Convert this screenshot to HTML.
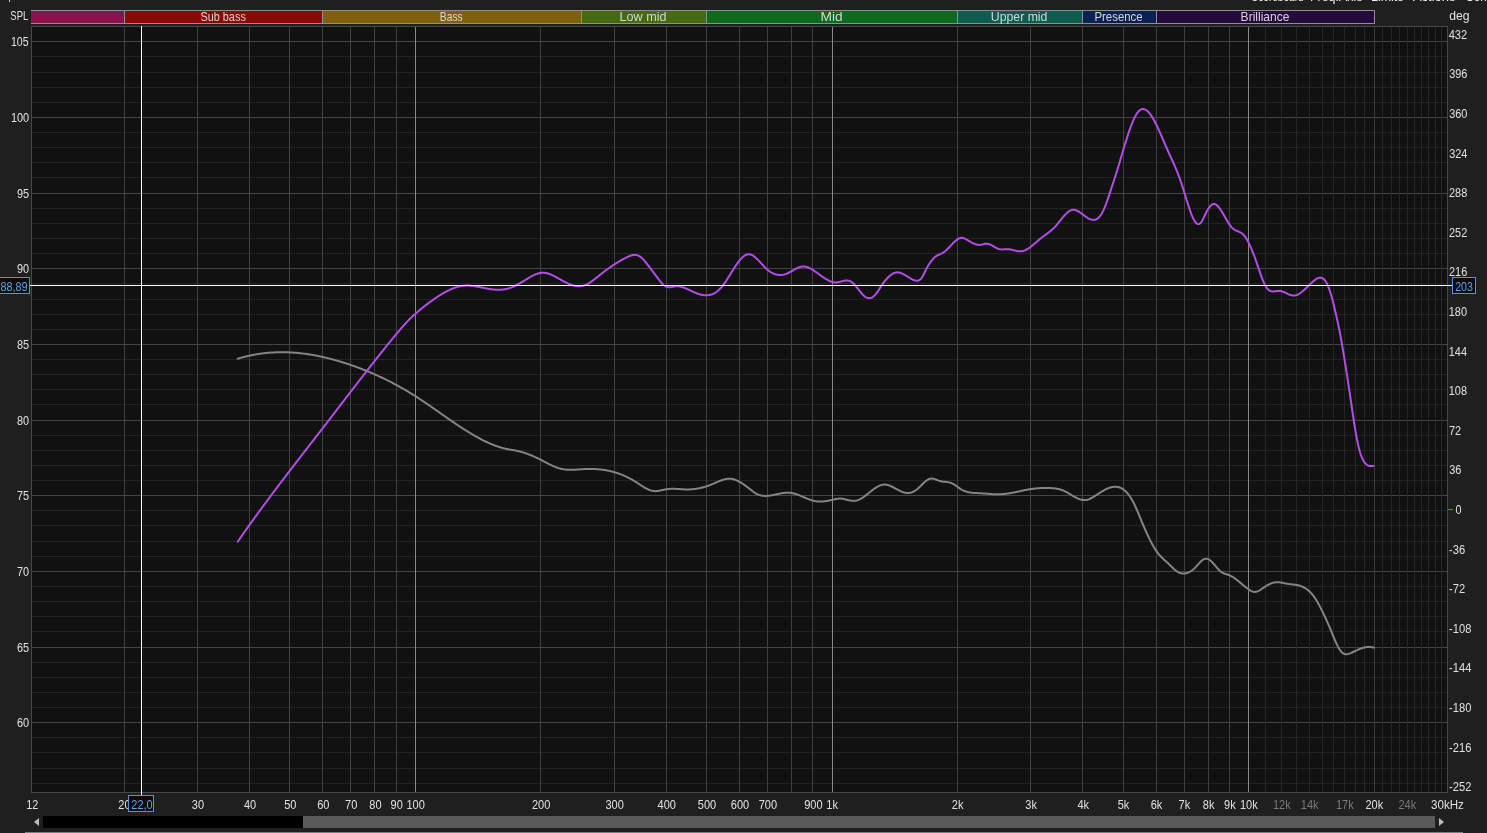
<!DOCTYPE html><html><head><meta charset="utf-8"><style>
html,body{margin:0;padding:0;background:#1f1f1f;width:1487px;height:833px;overflow:hidden}
svg{display:block;will-change:transform}
text{font-family:"Liberation Sans", sans-serif}
</style></head><body>
<svg width="1487" height="833" viewBox="0 0 1487 833">
<rect x="0" y="0" width="1487" height="833" fill="#1f1f1f"/>
<text transform="translate(1251.54,1.00) scale(0.840,1)" font-size="12" fill="#f0f0f0">Scoreboard</text>
<text transform="translate(1309.99,1.00) scale(1.035,1)" font-size="12" fill="#f0f0f0">Freq.Axis</text>
<text transform="translate(1370.98,1.00) scale(1.036,1)" font-size="12" fill="#f0f0f0">Limits</text>
<text transform="translate(1412.97,1.00) scale(1.080,1)" font-size="12" fill="#f0f0f0">Actions</text>
<text transform="translate(1465.41,1.00) scale(0.962,1)" font-size="12" fill="#f0f0f0">Controls</text>
<text transform="translate(10.37,20.10) scale(0.787,1)" font-size="12" fill="#e0e0e0">SPL</text>
<text transform="translate(1449.29,19.90) scale(1.013,1)" font-size="12" fill="#e0e0e0">deg</text>
<g shape-rendering="crispEdges">
<rect x="31" y="10" width="1344" height="14" fill="#8f8f8f"/>
<rect x="31" y="11" width="93" height="12" fill="#8c0f4e"/>
<rect x="125" y="11" width="197" height="12" fill="#8a0808"/>
<rect x="323" y="11" width="258" height="12" fill="#80600c"/>
<rect x="582" y="11" width="124" height="12" fill="#456a10"/>
<rect x="707" y="11" width="250" height="12" fill="#0c6a1e"/>
<rect x="958" y="11" width="124" height="12" fill="#0c5c50"/>
<rect x="1083" y="11" width="73" height="12" fill="#0a2152"/>
<rect x="1157" y="11" width="217" height="12" fill="#250a3c"/>
</g>
<text transform="translate(200.40,20.80) scale(0.909,1)" font-size="12" fill="#d6d6d6">Sub bass</text>
<text transform="translate(439.86,20.80) scale(0.859,1)" font-size="12" fill="#d6d6d6">Bass</text>
<text transform="translate(619.57,20.80) scale(1.053,1)" font-size="12" fill="#d6d6d6">Low mid</text>
<text transform="translate(820.58,20.80) scale(1.143,1)" font-size="12" fill="#d6d6d6">Mid</text>
<text transform="translate(990.75,20.80) scale(1.025,1)" font-size="12" fill="#d6d6d6">Upper mid</text>
<text transform="translate(1094.47,20.80) scale(0.950,1)" font-size="12" fill="#d6d6d6">Presence</text>
<text transform="translate(1240.62,20.80) scale(1.005,1)" font-size="12" fill="#d6d6d6">Brilliance</text>
<rect x="31" y="26" width="1417" height="767" fill="#111111"/>
<g shape-rendering="crispEdges">
<rect x="32" y="41" width="1415" height="1" fill="#444444"/>
<rect x="32" y="56" width="1415" height="1" fill="#232323"/>
<rect x="32" y="72" width="1415" height="1" fill="#232323"/>
<rect x="32" y="87" width="1415" height="1" fill="#232323"/>
<rect x="32" y="102" width="1415" height="1" fill="#232323"/>
<rect x="32" y="117" width="1415" height="1" fill="#444444"/>
<rect x="32" y="132" width="1415" height="1" fill="#232323"/>
<rect x="32" y="147" width="1415" height="1" fill="#232323"/>
<rect x="32" y="162" width="1415" height="1" fill="#232323"/>
<rect x="32" y="177" width="1415" height="1" fill="#232323"/>
<rect x="32" y="193" width="1415" height="1" fill="#444444"/>
<rect x="32" y="208" width="1415" height="1" fill="#232323"/>
<rect x="32" y="223" width="1415" height="1" fill="#232323"/>
<rect x="32" y="238" width="1415" height="1" fill="#232323"/>
<rect x="32" y="253" width="1415" height="1" fill="#232323"/>
<rect x="32" y="268" width="1415" height="1" fill="#444444"/>
<rect x="32" y="283" width="1415" height="1" fill="#232323"/>
<rect x="32" y="299" width="1415" height="1" fill="#232323"/>
<rect x="32" y="314" width="1415" height="1" fill="#232323"/>
<rect x="32" y="329" width="1415" height="1" fill="#232323"/>
<rect x="32" y="344" width="1415" height="1" fill="#444444"/>
<rect x="32" y="359" width="1415" height="1" fill="#232323"/>
<rect x="32" y="374" width="1415" height="1" fill="#232323"/>
<rect x="32" y="389" width="1415" height="1" fill="#232323"/>
<rect x="32" y="404" width="1415" height="1" fill="#232323"/>
<rect x="32" y="420" width="1415" height="1" fill="#444444"/>
<rect x="32" y="435" width="1415" height="1" fill="#232323"/>
<rect x="32" y="450" width="1415" height="1" fill="#232323"/>
<rect x="32" y="465" width="1415" height="1" fill="#232323"/>
<rect x="32" y="480" width="1415" height="1" fill="#232323"/>
<rect x="32" y="495" width="1415" height="1" fill="#444444"/>
<rect x="32" y="510" width="1415" height="1" fill="#232323"/>
<rect x="32" y="525" width="1415" height="1" fill="#232323"/>
<rect x="32" y="541" width="1415" height="1" fill="#232323"/>
<rect x="32" y="556" width="1415" height="1" fill="#232323"/>
<rect x="32" y="571" width="1415" height="1" fill="#444444"/>
<rect x="32" y="586" width="1415" height="1" fill="#232323"/>
<rect x="32" y="601" width="1415" height="1" fill="#232323"/>
<rect x="32" y="616" width="1415" height="1" fill="#232323"/>
<rect x="32" y="631" width="1415" height="1" fill="#232323"/>
<rect x="32" y="647" width="1415" height="1" fill="#444444"/>
<rect x="32" y="662" width="1415" height="1" fill="#232323"/>
<rect x="32" y="677" width="1415" height="1" fill="#232323"/>
<rect x="32" y="692" width="1415" height="1" fill="#232323"/>
<rect x="32" y="707" width="1415" height="1" fill="#232323"/>
<rect x="32" y="722" width="1415" height="1" fill="#444444"/>
<rect x="32" y="737" width="1415" height="1" fill="#232323"/>
<rect x="32" y="752" width="1415" height="1" fill="#232323"/>
<rect x="32" y="768" width="1415" height="1" fill="#232323"/>
<rect x="32" y="783" width="1415" height="1" fill="#232323"/>
<rect x="124" y="27" width="1" height="765" fill="#404040"/>
<rect x="197" y="27" width="1" height="765" fill="#404040"/>
<rect x="249" y="27" width="1" height="765" fill="#404040"/>
<rect x="289" y="27" width="1" height="765" fill="#404040"/>
<rect x="322" y="27" width="1" height="765" fill="#404040"/>
<rect x="350" y="27" width="1" height="765" fill="#404040"/>
<rect x="374" y="27" width="1" height="765" fill="#404040"/>
<rect x="396" y="27" width="1" height="765" fill="#404040"/>
<rect x="415" y="27" width="1" height="765" fill="#888888"/>
<rect x="540" y="27" width="1" height="765" fill="#404040"/>
<rect x="614" y="27" width="1" height="765" fill="#404040"/>
<rect x="666" y="27" width="1" height="765" fill="#404040"/>
<rect x="706" y="27" width="1" height="765" fill="#404040"/>
<rect x="739" y="27" width="1" height="765" fill="#404040"/>
<rect x="767" y="27" width="1" height="765" fill="#404040"/>
<rect x="791" y="27" width="1" height="765" fill="#404040"/>
<rect x="812" y="27" width="1" height="765" fill="#404040"/>
<rect x="832" y="27" width="1" height="765" fill="#888888"/>
<rect x="957" y="27" width="1" height="765" fill="#404040"/>
<rect x="1030" y="27" width="1" height="765" fill="#404040"/>
<rect x="1082" y="27" width="1" height="765" fill="#404040"/>
<rect x="1123" y="27" width="1" height="765" fill="#404040"/>
<rect x="1156" y="27" width="1" height="765" fill="#404040"/>
<rect x="1184" y="27" width="1" height="765" fill="#404040"/>
<rect x="1208" y="27" width="1" height="765" fill="#404040"/>
<rect x="1229" y="27" width="1" height="765" fill="#404040"/>
<rect x="1248" y="27" width="1" height="765" fill="#888888"/>
<rect x="1265" y="27" width="1" height="765" fill="#262626"/>
<rect x="1281" y="27" width="1" height="765" fill="#262626"/>
<rect x="1296" y="27" width="1" height="765" fill="#262626"/>
<rect x="1309" y="27" width="1" height="765" fill="#262626"/>
<rect x="1322" y="27" width="1" height="765" fill="#262626"/>
<rect x="1333" y="27" width="1" height="765" fill="#262626"/>
<rect x="1344" y="27" width="1" height="765" fill="#262626"/>
<rect x="1355" y="27" width="1" height="765" fill="#262626"/>
<rect x="1364" y="27" width="1" height="765" fill="#262626"/>
<rect x="1374" y="27" width="1" height="765" fill="#3c3c3c"/>
<rect x="1382" y="27" width="1" height="765" fill="#262626"/>
<rect x="1391" y="27" width="1" height="765" fill="#262626"/>
<rect x="1399" y="27" width="1" height="765" fill="#262626"/>
<rect x="1407" y="27" width="1" height="765" fill="#262626"/>
<rect x="1414" y="27" width="1" height="765" fill="#262626"/>
<rect x="1421" y="27" width="1" height="765" fill="#262626"/>
<rect x="1428" y="27" width="1" height="765" fill="#262626"/>
<rect x="1435" y="27" width="1" height="765" fill="#262626"/>
<rect x="1441" y="27" width="1" height="765" fill="#262626"/>
<rect x="31" y="26" width="1417" height="1" fill="#484848"/>
<rect x="31" y="792" width="1417" height="1" fill="#484848"/>
<rect x="31" y="26" width="1" height="767" fill="#484848"/>
<rect x="1447" y="26" width="1" height="767" fill="#484848"/>
</g>
<path d="M237.60,358.78 L238.10,358.62 L238.60,358.47 L239.10,358.32 L239.60,358.18 L240.10,358.03 L240.60,357.89 L241.10,357.75 L241.60,357.61 L242.10,357.47 L242.60,357.33 L243.10,357.20 L243.60,357.07 L244.10,356.94 L244.60,356.81 L245.10,356.69 L245.60,356.56 L246.10,356.44 L246.60,356.32 L247.10,356.20 L247.60,356.08 L248.10,355.97 L248.60,355.85 L249.10,355.74 L249.60,355.63 L250.10,355.52 L250.60,355.42 L251.10,355.31 L251.60,355.21 L252.10,355.11 L252.60,355.01 L253.10,354.92 L253.60,354.82 L254.10,354.73 L254.60,354.64 L255.10,354.55 L255.60,354.46 L256.10,354.37 L256.60,354.29 L257.10,354.21 L257.60,354.12 L258.10,354.04 L258.60,353.97 L259.10,353.89 L259.60,353.82 L260.10,353.75 L260.60,353.68 L261.10,353.61 L261.60,353.54 L262.10,353.47 L262.60,353.41 L263.10,353.35 L263.60,353.29 L264.10,353.23 L264.60,353.17 L265.10,353.12 L265.60,353.06 L266.10,353.01 L266.60,352.96 L267.10,352.91 L267.60,352.87 L268.10,352.82 L268.60,352.78 L269.10,352.74 L269.60,352.70 L270.10,352.66 L270.60,352.62 L271.10,352.59 L271.60,352.55 L272.10,352.52 L272.60,352.49 L273.10,352.46 L273.60,352.44 L274.10,352.41 L274.60,352.39 L275.10,352.36 L275.60,352.34 L276.10,352.33 L276.60,352.31 L277.10,352.29 L277.60,352.28 L278.10,352.27 L278.60,352.25 L279.10,352.24 L279.60,352.24 L280.10,352.23 L280.60,352.23 L281.10,352.22 L281.60,352.22 L282.10,352.22 L282.60,352.22 L283.10,352.23 L283.60,352.23 L284.10,352.24 L284.60,352.24 L285.10,352.25 L285.60,352.26 L286.10,352.27 L286.60,352.29 L287.10,352.30 L287.60,352.32 L288.10,352.34 L288.60,352.36 L289.10,352.38 L289.60,352.40 L290.10,352.43 L290.60,352.45 L291.10,352.48 L291.60,352.51 L292.10,352.54 L292.60,352.57 L293.10,352.60 L293.60,352.63 L294.10,352.67 L294.60,352.71 L295.10,352.75 L295.60,352.79 L296.10,352.83 L296.60,352.87 L297.10,352.91 L297.60,352.96 L298.10,353.01 L298.60,353.06 L299.10,353.11 L299.60,353.16 L300.10,353.21 L300.60,353.26 L301.10,353.32 L301.60,353.38 L302.10,353.43 L302.60,353.49 L303.10,353.55 L303.60,353.62 L304.10,353.68 L304.60,353.74 L305.10,353.81 L305.60,353.88 L306.10,353.95 L306.60,354.02 L307.10,354.09 L307.60,354.16 L308.10,354.24 L308.60,354.31 L309.10,354.39 L309.60,354.47 L310.10,354.55 L310.60,354.63 L311.10,354.71 L311.60,354.79 L312.10,354.88 L312.60,354.96 L313.10,355.05 L313.60,355.14 L314.10,355.23 L314.60,355.32 L315.10,355.41 L315.60,355.51 L316.10,355.60 L316.60,355.70 L317.10,355.79 L317.60,355.89 L318.10,355.99 L318.60,356.09 L319.10,356.20 L319.60,356.30 L320.10,356.40 L320.60,356.51 L321.10,356.62 L321.60,356.72 L322.10,356.83 L322.60,356.94 L323.10,357.06 L323.60,357.17 L324.10,357.28 L324.60,357.40 L325.10,357.52 L325.60,357.63 L326.10,357.75 L326.60,357.87 L327.10,357.99 L327.60,358.12 L328.10,358.24 L328.60,358.36 L329.10,358.49 L329.60,358.62 L330.10,358.74 L330.60,358.87 L331.10,359.00 L331.60,359.14 L332.10,359.27 L332.60,359.40 L333.10,359.54 L333.60,359.67 L334.10,359.81 L334.60,359.95 L335.10,360.09 L335.60,360.23 L336.10,360.37 L336.60,360.51 L337.10,360.65 L337.60,360.80 L338.10,360.94 L338.60,361.09 L339.10,361.24 L339.60,361.39 L340.10,361.54 L340.60,361.69 L341.10,361.84 L341.60,361.99 L342.10,362.15 L342.60,362.30 L343.10,362.46 L343.60,362.61 L344.10,362.77 L344.60,362.93 L345.10,363.09 L345.60,363.25 L346.10,363.41 L346.60,363.58 L347.10,363.74 L347.60,363.90 L348.10,364.07 L348.60,364.24 L349.10,364.40 L349.60,364.57 L350.10,364.74 L350.60,364.91 L351.10,365.09 L351.60,365.26 L352.10,365.43 L352.60,365.61 L353.10,365.78 L353.60,365.96 L354.10,366.14 L354.60,366.31 L355.10,366.49 L355.60,366.67 L356.10,366.86 L356.60,367.04 L357.10,367.22 L357.60,367.41 L358.10,367.59 L358.60,367.78 L359.10,367.97 L359.60,368.16 L360.10,368.35 L360.60,368.54 L361.10,368.73 L361.60,368.92 L362.10,369.11 L362.60,369.31 L363.10,369.50 L363.60,369.70 L364.10,369.90 L364.60,370.10 L365.10,370.30 L365.60,370.50 L366.10,370.70 L366.60,370.90 L367.10,371.11 L367.60,371.31 L368.10,371.52 L368.60,371.73 L369.10,371.94 L369.60,372.15 L370.10,372.36 L370.60,372.57 L371.10,372.78 L371.60,372.99 L372.10,373.21 L372.60,373.43 L373.10,373.64 L373.60,373.86 L374.10,374.08 L374.60,374.30 L375.10,374.52 L375.60,374.74 L376.10,374.97 L376.60,375.19 L377.10,375.42 L377.60,375.65 L378.10,375.87 L378.60,376.10 L379.10,376.33 L379.60,376.56 L380.10,376.80 L380.60,377.03 L381.10,377.27 L381.60,377.50 L382.10,377.74 L382.60,377.98 L383.10,378.22 L383.60,378.46 L384.10,378.70 L384.60,378.94 L385.10,379.18 L385.60,379.43 L386.10,379.68 L386.60,379.92 L387.10,380.17 L387.60,380.42 L388.10,380.67 L388.60,380.92 L389.10,381.18 L389.60,381.43 L390.10,381.69 L390.60,381.94 L391.10,382.20 L391.60,382.46 L392.10,382.72 L392.60,382.98 L393.10,383.24 L393.60,383.51 L394.10,383.77 L394.60,384.04 L395.10,384.31 L395.60,384.57 L396.10,384.84 L396.60,385.12 L397.10,385.39 L397.60,385.66 L398.10,385.94 L398.60,386.21 L399.10,386.49 L399.60,386.77 L400.10,387.05 L400.60,387.33 L401.10,387.61 L401.60,387.89 L402.10,388.17 L402.60,388.46 L403.10,388.75 L403.60,389.04 L404.10,389.32 L404.60,389.61 L405.10,389.91 L405.60,390.20 L406.10,390.49 L406.60,390.79 L407.10,391.09 L407.60,391.38 L408.10,391.68 L408.60,391.98 L409.10,392.28 L409.60,392.59 L410.10,392.89 L410.60,393.20 L411.10,393.50 L411.60,393.81 L412.10,394.12 L412.60,394.43 L413.10,394.74 L413.60,395.06 L414.10,395.37 L414.60,395.69 L415.10,396.00 L415.60,396.32 L416.10,396.64 L416.60,396.96 L417.10,397.29 L417.60,397.61 L418.10,397.93 L418.60,398.26 L419.10,398.59 L419.60,398.91 L420.10,399.24 L420.60,399.57 L421.10,399.90 L421.60,400.24 L422.10,400.57 L422.60,400.90 L423.10,401.24 L423.60,401.58 L424.10,401.91 L424.60,402.25 L425.10,402.59 L425.60,402.93 L426.10,403.27 L426.60,403.61 L427.10,403.95 L427.60,404.29 L428.10,404.63 L428.60,404.98 L429.10,405.32 L429.60,405.67 L430.10,406.01 L430.60,406.36 L431.10,406.70 L431.60,407.05 L432.10,407.40 L432.60,407.74 L433.10,408.09 L433.60,408.44 L434.10,408.79 L434.60,409.14 L435.10,409.49 L435.60,409.84 L436.10,410.19 L436.60,410.54 L437.10,410.89 L437.60,411.24 L438.10,411.59 L438.60,411.94 L439.10,412.29 L439.60,412.64 L440.10,412.99 L440.60,413.34 L441.10,413.69 L441.60,414.04 L442.10,414.39 L442.60,414.74 L443.10,415.09 L443.60,415.44 L444.10,415.79 L444.60,416.14 L445.10,416.49 L445.60,416.84 L446.10,417.19 L446.60,417.54 L447.10,417.89 L447.60,418.23 L448.10,418.58 L448.60,418.93 L449.10,419.27 L449.60,419.62 L450.10,419.96 L450.60,420.31 L451.10,420.65 L451.60,421.00 L452.10,421.34 L452.60,421.68 L453.10,422.02 L453.60,422.37 L454.10,422.71 L454.60,423.05 L455.10,423.38 L455.60,423.72 L456.10,424.06 L456.60,424.40 L457.10,424.73 L457.60,425.07 L458.10,425.40 L458.60,425.73 L459.10,426.06 L459.60,426.39 L460.10,426.72 L460.60,427.05 L461.10,427.38 L461.60,427.70 L462.10,428.03 L462.60,428.35 L463.10,428.68 L463.60,429.00 L464.10,429.32 L464.60,429.64 L465.10,429.95 L465.60,430.27 L466.10,430.59 L466.60,430.90 L467.10,431.21 L467.60,431.52 L468.10,431.83 L468.60,432.14 L469.10,432.44 L469.60,432.75 L470.10,433.05 L470.60,433.35 L471.10,433.65 L471.60,433.95 L472.10,434.25 L472.60,434.54 L473.10,434.84 L473.60,435.13 L474.10,435.42 L474.60,435.70 L475.10,435.99 L475.60,436.27 L476.10,436.55 L476.60,436.83 L477.10,437.11 L477.60,437.39 L478.10,437.66 L478.60,437.93 L479.10,438.20 L479.60,438.47 L480.10,438.74 L480.60,439.00 L481.10,439.26 L481.60,439.52 L482.10,439.78 L482.60,440.03 L483.10,440.29 L483.60,440.54 L484.10,440.79 L484.60,441.03 L485.10,441.27 L485.60,441.51 L486.10,441.75 L486.60,441.99 L487.10,442.22 L487.60,442.45 L488.10,442.68 L488.60,442.90 L489.10,443.13 L489.60,443.35 L490.10,443.56 L490.60,443.78 L491.10,443.99 L491.60,444.20 L492.10,444.40 L492.60,444.61 L493.10,444.81 L493.60,445.00 L494.10,445.20 L494.60,445.39 L495.10,445.57 L495.60,445.76 L496.10,445.94 L496.60,446.12 L497.10,446.29 L497.60,446.46 L498.10,446.63 L498.60,446.80 L499.10,446.96 L499.60,447.12 L500.10,447.27 L500.60,447.42 L501.10,447.57 L501.60,447.71 L502.10,447.85 L502.60,447.99 L503.10,448.12 L503.60,448.25 L504.10,448.38 L504.60,448.50 L505.10,448.62 L505.60,448.73 L506.10,448.84 L506.60,448.95 L507.10,449.05 L507.60,449.15 L508.10,449.25 L508.60,449.34 L509.10,449.43 L509.60,449.52 L510.10,449.61 L510.60,449.70 L511.10,449.78 L511.60,449.87 L512.10,449.95 L512.60,450.04 L513.10,450.12 L513.60,450.21 L514.10,450.30 L514.60,450.39 L515.10,450.48 L515.60,450.57 L516.10,450.67 L516.60,450.76 L517.10,450.86 L517.60,450.97 L518.10,451.08 L518.60,451.19 L519.10,451.31 L519.60,451.43 L520.10,451.56 L520.60,451.69 L521.10,451.82 L521.60,451.96 L522.10,452.10 L522.60,452.25 L523.10,452.40 L523.60,452.56 L524.10,452.72 L524.60,452.88 L525.10,453.05 L525.60,453.22 L526.10,453.39 L526.60,453.57 L527.10,453.75 L527.60,453.93 L528.10,454.12 L528.60,454.31 L529.10,454.50 L529.60,454.70 L530.10,454.90 L530.60,455.10 L531.10,455.31 L531.60,455.52 L532.10,455.73 L532.60,455.95 L533.10,456.16 L533.60,456.39 L534.10,456.61 L534.60,456.83 L535.10,457.06 L535.60,457.29 L536.10,457.53 L536.60,457.76 L537.10,458.00 L537.60,458.24 L538.10,458.48 L538.60,458.73 L539.10,458.98 L539.60,459.22 L540.10,459.48 L540.60,459.73 L541.10,459.98 L541.60,460.24 L542.10,460.50 L542.60,460.76 L543.10,461.02 L543.60,461.28 L544.10,461.54 L544.60,461.80 L545.10,462.06 L545.60,462.32 L546.10,462.58 L546.60,462.84 L547.10,463.10 L547.60,463.36 L548.10,463.61 L548.60,463.86 L549.10,464.12 L549.60,464.36 L550.10,464.61 L550.60,464.85 L551.10,465.09 L551.60,465.33 L552.10,465.56 L552.60,465.79 L553.10,466.01 L553.60,466.23 L554.10,466.45 L554.60,466.66 L555.10,466.86 L555.60,467.06 L556.10,467.26 L556.60,467.44 L557.10,467.62 L557.60,467.80 L558.10,467.96 L558.60,468.12 L559.10,468.28 L559.60,468.42 L560.10,468.56 L560.60,468.69 L561.10,468.81 L561.60,468.92 L562.10,469.03 L562.60,469.12 L563.10,469.21 L563.60,469.29 L564.10,469.37 L564.60,469.44 L565.10,469.50 L565.60,469.56 L566.10,469.61 L566.60,469.65 L567.10,469.69 L567.60,469.72 L568.10,469.75 L568.60,469.77 L569.10,469.79 L569.60,469.80 L570.10,469.81 L570.60,469.81 L571.10,469.81 L571.60,469.81 L572.10,469.80 L572.60,469.79 L573.10,469.78 L573.60,469.76 L574.10,469.74 L574.60,469.72 L575.10,469.69 L575.60,469.67 L576.10,469.64 L576.60,469.61 L577.10,469.58 L577.60,469.55 L578.10,469.51 L578.60,469.48 L579.10,469.44 L579.60,469.41 L580.10,469.37 L580.60,469.34 L581.10,469.30 L581.60,469.27 L582.10,469.24 L582.60,469.20 L583.10,469.17 L583.60,469.14 L584.10,469.11 L584.60,469.09 L585.10,469.06 L585.60,469.04 L586.10,469.02 L586.60,469.00 L587.10,468.98 L587.60,468.97 L588.10,468.96 L588.60,468.95 L589.10,468.94 L589.60,468.94 L590.10,468.94 L590.60,468.94 L591.10,468.94 L591.60,468.95 L592.10,468.95 L592.60,468.96 L593.10,468.98 L593.60,468.99 L594.10,469.01 L594.60,469.03 L595.10,469.05 L595.60,469.08 L596.10,469.11 L596.60,469.14 L597.10,469.17 L597.60,469.21 L598.10,469.25 L598.60,469.29 L599.10,469.33 L599.60,469.38 L600.10,469.43 L600.60,469.49 L601.10,469.54 L601.60,469.60 L602.10,469.66 L602.60,469.73 L603.10,469.80 L603.60,469.87 L604.10,469.94 L604.60,470.02 L605.10,470.10 L605.60,470.18 L606.10,470.27 L606.60,470.36 L607.10,470.45 L607.60,470.55 L608.10,470.65 L608.60,470.75 L609.10,470.86 L609.60,470.97 L610.10,471.08 L610.60,471.20 L611.10,471.32 L611.60,471.44 L612.10,471.57 L612.60,471.70 L613.10,471.83 L613.60,471.97 L614.10,472.11 L614.60,472.25 L615.10,472.40 L615.60,472.55 L616.10,472.70 L616.60,472.86 L617.10,473.02 L617.60,473.19 L618.10,473.36 L618.60,473.53 L619.10,473.71 L619.60,473.89 L620.10,474.07 L620.60,474.26 L621.10,474.45 L621.60,474.65 L622.10,474.85 L622.60,475.05 L623.10,475.26 L623.60,475.47 L624.10,475.69 L624.60,475.91 L625.10,476.14 L625.60,476.36 L626.10,476.60 L626.60,476.83 L627.10,477.07 L627.60,477.32 L628.10,477.57 L628.60,477.82 L629.10,478.08 L629.60,478.34 L630.10,478.60 L630.60,478.87 L631.10,479.15 L631.60,479.43 L632.10,479.71 L632.60,480.00 L633.10,480.29 L633.60,480.59 L634.10,480.89 L634.60,481.20 L635.10,481.51 L635.60,481.82 L636.10,482.14 L636.60,482.46 L637.10,482.79 L637.60,483.11 L638.10,483.44 L638.60,483.77 L639.10,484.10 L639.60,484.43 L640.10,484.75 L640.60,485.08 L641.10,485.40 L641.60,485.73 L642.10,486.04 L642.60,486.36 L643.10,486.67 L643.60,486.97 L644.10,487.27 L644.60,487.56 L645.10,487.84 L645.60,488.12 L646.10,488.39 L646.60,488.65 L647.10,488.90 L647.60,489.14 L648.10,489.37 L648.60,489.59 L649.10,489.79 L649.60,489.99 L650.10,490.17 L650.60,490.34 L651.10,490.49 L651.60,490.63 L652.10,490.75 L652.60,490.86 L653.10,490.95 L653.60,491.02 L654.10,491.08 L654.60,491.11 L655.10,491.13 L655.60,491.13 L656.10,491.12 L656.60,491.09 L657.10,491.04 L657.60,490.99 L658.10,490.92 L658.60,490.85 L659.10,490.76 L659.60,490.67 L660.10,490.57 L660.60,490.46 L661.10,490.35 L661.60,490.24 L662.10,490.13 L662.60,490.01 L663.10,489.90 L663.60,489.79 L664.10,489.68 L664.60,489.58 L665.10,489.48 L665.60,489.39 L666.10,489.30 L666.60,489.23 L667.10,489.16 L667.60,489.10 L668.10,489.04 L668.60,488.99 L669.10,488.95 L669.60,488.92 L670.10,488.89 L670.60,488.87 L671.10,488.85 L671.60,488.84 L672.10,488.83 L672.60,488.83 L673.10,488.83 L673.60,488.83 L674.10,488.84 L674.60,488.85 L675.10,488.87 L675.60,488.89 L676.10,488.91 L676.60,488.93 L677.10,488.96 L677.60,488.98 L678.10,489.01 L678.60,489.04 L679.10,489.07 L679.60,489.10 L680.10,489.13 L680.60,489.16 L681.10,489.19 L681.60,489.22 L682.10,489.25 L682.60,489.28 L683.10,489.31 L683.60,489.33 L684.10,489.36 L684.60,489.38 L685.10,489.40 L685.60,489.41 L686.10,489.43 L686.60,489.44 L687.10,489.44 L687.60,489.44 L688.10,489.44 L688.60,489.43 L689.10,489.42 L689.60,489.41 L690.10,489.39 L690.60,489.36 L691.10,489.33 L691.60,489.30 L692.10,489.26 L692.60,489.22 L693.10,489.17 L693.60,489.12 L694.10,489.06 L694.60,489.00 L695.10,488.94 L695.60,488.87 L696.10,488.79 L696.60,488.71 L697.10,488.63 L697.60,488.54 L698.10,488.45 L698.60,488.36 L699.10,488.26 L699.60,488.16 L700.10,488.05 L700.60,487.93 L701.10,487.82 L701.60,487.70 L702.10,487.57 L702.60,487.44 L703.10,487.31 L703.60,487.17 L704.10,487.03 L704.60,486.89 L705.10,486.74 L705.60,486.59 L706.10,486.43 L706.60,486.27 L707.10,486.10 L707.60,485.93 L708.10,485.76 L708.60,485.58 L709.10,485.40 L709.60,485.22 L710.10,485.03 L710.60,484.84 L711.10,484.64 L711.60,484.44 L712.10,484.23 L712.60,484.03 L713.10,483.82 L713.60,483.60 L714.10,483.39 L714.60,483.17 L715.10,482.95 L715.60,482.73 L716.10,482.51 L716.60,482.29 L717.10,482.08 L717.60,481.86 L718.10,481.65 L718.60,481.44 L719.10,481.23 L719.60,481.03 L720.10,480.83 L720.60,480.64 L721.10,480.46 L721.60,480.28 L722.10,480.10 L722.60,479.94 L723.10,479.78 L723.60,479.63 L724.10,479.49 L724.60,479.36 L725.10,479.24 L725.60,479.13 L726.10,479.03 L726.60,478.95 L727.10,478.87 L727.60,478.81 L728.10,478.77 L728.60,478.73 L729.10,478.71 L729.60,478.71 L730.10,478.73 L730.60,478.75 L731.10,478.80 L731.60,478.86 L732.10,478.94 L732.60,479.04 L733.10,479.15 L733.60,479.28 L734.10,479.42 L734.60,479.57 L735.10,479.74 L735.60,479.93 L736.10,480.12 L736.60,480.33 L737.10,480.55 L737.60,480.79 L738.10,481.03 L738.60,481.28 L739.10,481.55 L739.60,481.83 L740.10,482.11 L740.60,482.41 L741.10,482.71 L741.60,483.03 L742.10,483.35 L742.60,483.68 L743.10,484.01 L743.60,484.36 L744.10,484.70 L744.60,485.06 L745.10,485.42 L745.60,485.79 L746.10,486.16 L746.60,486.54 L747.10,486.92 L747.60,487.30 L748.10,487.69 L748.60,488.08 L749.10,488.47 L749.60,488.87 L750.10,489.26 L750.60,489.65 L751.10,490.04 L751.60,490.42 L752.10,490.80 L752.60,491.18 L753.10,491.55 L753.60,491.90 L754.10,492.25 L754.60,492.59 L755.10,492.91 L755.60,493.23 L756.10,493.52 L756.60,493.80 L757.10,494.07 L757.60,494.31 L758.10,494.54 L758.60,494.75 L759.10,494.94 L759.60,495.10 L760.10,495.25 L760.60,495.39 L761.10,495.50 L761.60,495.60 L762.10,495.69 L762.60,495.76 L763.10,495.82 L763.60,495.86 L764.10,495.89 L764.60,495.92 L765.10,495.93 L765.60,495.93 L766.10,495.92 L766.60,495.90 L767.10,495.87 L767.60,495.84 L768.10,495.80 L768.60,495.75 L769.10,495.69 L769.60,495.63 L770.10,495.56 L770.60,495.48 L771.10,495.40 L771.60,495.32 L772.10,495.23 L772.60,495.14 L773.10,495.04 L773.60,494.94 L774.10,494.84 L774.60,494.73 L775.10,494.63 L775.60,494.52 L776.10,494.41 L776.60,494.30 L777.10,494.20 L777.60,494.09 L778.10,493.98 L778.60,493.87 L779.10,493.77 L779.60,493.67 L780.10,493.57 L780.60,493.47 L781.10,493.38 L781.60,493.29 L782.10,493.21 L782.60,493.13 L783.10,493.05 L783.60,492.98 L784.10,492.92 L784.60,492.86 L785.10,492.81 L785.60,492.77 L786.10,492.74 L786.60,492.71 L787.10,492.69 L787.60,492.69 L788.10,492.69 L788.60,492.70 L789.10,492.72 L789.60,492.75 L790.10,492.80 L790.60,492.85 L791.10,492.92 L791.60,493.00 L792.10,493.09 L792.60,493.19 L793.10,493.30 L793.60,493.42 L794.10,493.55 L794.60,493.68 L795.10,493.83 L795.60,493.98 L796.10,494.14 L796.60,494.31 L797.10,494.48 L797.60,494.66 L798.10,494.85 L798.60,495.04 L799.10,495.23 L799.60,495.43 L800.10,495.63 L800.60,495.84 L801.10,496.05 L801.60,496.26 L802.10,496.47 L802.60,496.68 L803.10,496.89 L803.60,497.11 L804.10,497.32 L804.60,497.54 L805.10,497.75 L805.60,497.96 L806.10,498.17 L806.60,498.38 L807.10,498.58 L807.60,498.79 L808.10,498.98 L808.60,499.18 L809.10,499.37 L809.60,499.55 L810.10,499.73 L810.60,499.90 L811.10,500.07 L811.60,500.23 L812.10,500.38 L812.60,500.52 L813.10,500.66 L813.60,500.79 L814.10,500.91 L814.60,501.01 L815.10,501.11 L815.60,501.20 L816.10,501.28 L816.60,501.35 L817.10,501.41 L817.60,501.46 L818.10,501.50 L818.60,501.53 L819.10,501.55 L819.60,501.56 L820.10,501.57 L820.60,501.57 L821.10,501.56 L821.60,501.54 L822.10,501.52 L822.60,501.48 L823.10,501.45 L823.60,501.40 L824.10,501.35 L824.60,501.29 L825.10,501.23 L825.60,501.16 L826.10,501.09 L826.60,501.01 L827.10,500.93 L827.60,500.84 L828.10,500.74 L828.60,500.65 L829.10,500.55 L829.60,500.44 L830.10,500.33 L830.60,500.22 L831.10,500.11 L831.60,499.99 L832.10,499.88 L832.60,499.76 L833.10,499.64 L833.60,499.52 L834.10,499.41 L834.60,499.30 L835.10,499.19 L835.60,499.09 L836.10,498.99 L836.60,498.91 L837.10,498.83 L837.60,498.76 L838.10,498.70 L838.60,498.65 L839.10,498.62 L839.60,498.59 L840.10,498.59 L840.60,498.60 L841.10,498.62 L841.60,498.66 L842.10,498.72 L842.60,498.79 L843.10,498.87 L843.60,498.96 L844.10,499.06 L844.60,499.17 L845.10,499.29 L845.60,499.41 L846.10,499.53 L846.60,499.66 L847.10,499.79 L847.60,499.91 L848.10,500.04 L848.60,500.16 L849.10,500.28 L849.60,500.39 L850.10,500.49 L850.60,500.58 L851.10,500.67 L851.60,500.74 L852.10,500.80 L852.60,500.84 L853.10,500.87 L853.60,500.88 L854.10,500.87 L854.60,500.85 L855.10,500.80 L855.60,500.72 L856.10,500.63 L856.60,500.51 L857.10,500.37 L857.60,500.21 L858.10,500.03 L858.60,499.83 L859.10,499.61 L859.60,499.38 L860.10,499.12 L860.60,498.86 L861.10,498.57 L861.60,498.28 L862.10,497.97 L862.60,497.65 L863.10,497.32 L863.60,496.97 L864.10,496.62 L864.60,496.26 L865.10,495.89 L865.60,495.51 L866.10,495.13 L866.60,494.74 L867.10,494.35 L867.60,493.96 L868.10,493.56 L868.60,493.16 L869.10,492.76 L869.60,492.36 L870.10,491.96 L870.60,491.56 L871.10,491.16 L871.60,490.77 L872.10,490.38 L872.60,490.00 L873.10,489.62 L873.60,489.25 L874.10,488.89 L874.60,488.54 L875.10,488.19 L875.60,487.86 L876.10,487.54 L876.60,487.23 L877.10,486.93 L877.60,486.64 L878.10,486.37 L878.60,486.12 L879.10,485.88 L879.60,485.66 L880.10,485.46 L880.60,485.28 L881.10,485.11 L881.60,484.97 L882.10,484.85 L882.60,484.75 L883.10,484.67 L883.60,484.62 L884.10,484.59 L884.60,484.59 L885.10,484.61 L885.60,484.65 L886.10,484.72 L886.60,484.80 L887.10,484.90 L887.60,485.02 L888.10,485.16 L888.60,485.31 L889.10,485.48 L889.60,485.66 L890.10,485.86 L890.60,486.06 L891.10,486.28 L891.60,486.51 L892.10,486.74 L892.60,486.99 L893.10,487.24 L893.60,487.50 L894.10,487.76 L894.60,488.03 L895.10,488.30 L895.60,488.57 L896.10,488.84 L896.60,489.11 L897.10,489.38 L897.60,489.65 L898.10,489.92 L898.60,490.18 L899.10,490.44 L899.60,490.69 L900.10,490.93 L900.60,491.17 L901.10,491.40 L901.60,491.61 L902.10,491.82 L902.60,492.01 L903.10,492.19 L903.60,492.36 L904.10,492.51 L904.60,492.65 L905.10,492.76 L905.60,492.86 L906.10,492.94 L906.60,493.01 L907.10,493.04 L907.60,493.06 L908.10,493.06 L908.60,493.03 L909.10,492.98 L909.60,492.90 L910.10,492.80 L910.60,492.68 L911.10,492.54 L911.60,492.38 L912.10,492.19 L912.60,491.99 L913.10,491.76 L913.60,491.51 L914.10,491.24 L914.60,490.95 L915.10,490.64 L915.60,490.31 L916.10,489.96 L916.60,489.59 L917.10,489.21 L917.60,488.80 L918.10,488.37 L918.60,487.93 L919.10,487.47 L919.60,487.00 L920.10,486.51 L920.60,486.02 L921.10,485.52 L921.60,485.02 L922.10,484.51 L922.60,484.02 L923.10,483.52 L923.60,483.04 L924.10,482.56 L924.60,482.10 L925.10,481.66 L925.60,481.23 L926.10,480.83 L926.60,480.45 L927.10,480.10 L927.60,479.78 L928.10,479.50 L928.60,479.25 L929.10,479.04 L929.60,478.87 L930.10,478.74 L930.60,478.65 L931.10,478.61 L931.60,478.59 L932.10,478.62 L932.60,478.67 L933.10,478.74 L933.60,478.85 L934.10,478.97 L934.60,479.11 L935.10,479.27 L935.60,479.44 L936.10,479.62 L936.60,479.80 L937.10,479.99 L937.60,480.18 L938.10,480.37 L938.60,480.56 L939.10,480.74 L939.60,480.90 L940.10,481.06 L940.60,481.19 L941.10,481.31 L941.60,481.42 L942.10,481.50 L942.60,481.58 L943.10,481.65 L943.60,481.71 L944.10,481.76 L944.60,481.81 L945.10,481.85 L945.60,481.90 L946.10,481.95 L946.60,482.00 L947.10,482.06 L947.60,482.12 L948.10,482.19 L948.60,482.28 L949.10,482.38 L949.60,482.49 L950.10,482.63 L950.60,482.78 L951.10,482.95 L951.60,483.15 L952.10,483.37 L952.60,483.62 L953.10,483.89 L953.60,484.18 L954.10,484.48 L954.60,484.81 L955.10,485.14 L955.60,485.49 L956.10,485.84 L956.60,486.20 L957.10,486.56 L957.60,486.93 L958.10,487.29 L958.60,487.65 L959.10,488.00 L959.60,488.34 L960.10,488.67 L960.60,488.99 L961.10,489.30 L961.60,489.58 L962.10,489.86 L962.60,490.11 L963.10,490.36 L963.60,490.58 L964.10,490.80 L964.60,491.00 L965.10,491.19 L965.60,491.37 L966.10,491.53 L966.60,491.68 L967.10,491.83 L967.60,491.96 L968.10,492.08 L968.60,492.20 L969.10,492.30 L969.60,492.39 L970.10,492.48 L970.60,492.56 L971.10,492.63 L971.60,492.70 L972.10,492.76 L972.60,492.81 L973.10,492.86 L973.60,492.91 L974.10,492.95 L974.60,492.98 L975.10,493.01 L975.60,493.04 L976.10,493.07 L976.60,493.10 L977.10,493.12 L977.60,493.14 L978.10,493.16 L978.60,493.18 L979.10,493.20 L979.60,493.23 L980.10,493.25 L980.60,493.27 L981.10,493.30 L981.60,493.33 L982.10,493.36 L982.60,493.39 L983.10,493.43 L983.60,493.46 L984.10,493.50 L984.60,493.54 L985.10,493.58 L985.60,493.62 L986.10,493.66 L986.60,493.70 L987.10,493.74 L987.60,493.78 L988.10,493.82 L988.60,493.86 L989.10,493.90 L989.60,493.93 L990.10,493.97 L990.60,494.01 L991.10,494.04 L991.60,494.07 L992.10,494.10 L992.60,494.13 L993.10,494.16 L993.60,494.18 L994.10,494.20 L994.60,494.22 L995.10,494.23 L995.60,494.24 L996.10,494.25 L996.60,494.26 L997.10,494.26 L997.60,494.26 L998.10,494.25 L998.60,494.25 L999.10,494.24 L999.60,494.22 L1000.10,494.21 L1000.60,494.19 L1001.10,494.16 L1001.60,494.14 L1002.10,494.11 L1002.60,494.07 L1003.10,494.04 L1003.60,494.00 L1004.10,493.95 L1004.60,493.91 L1005.10,493.86 L1005.60,493.80 L1006.10,493.74 L1006.60,493.68 L1007.10,493.62 L1007.60,493.55 L1008.10,493.48 L1008.60,493.41 L1009.10,493.33 L1009.60,493.25 L1010.10,493.17 L1010.60,493.08 L1011.10,493.00 L1011.60,492.91 L1012.10,492.82 L1012.60,492.72 L1013.10,492.63 L1013.60,492.53 L1014.10,492.43 L1014.60,492.33 L1015.10,492.23 L1015.60,492.12 L1016.10,492.02 L1016.60,491.91 L1017.10,491.81 L1017.60,491.70 L1018.10,491.59 L1018.60,491.48 L1019.10,491.38 L1019.60,491.27 L1020.10,491.16 L1020.60,491.05 L1021.10,490.94 L1021.60,490.83 L1022.10,490.73 L1022.60,490.62 L1023.10,490.51 L1023.60,490.41 L1024.10,490.30 L1024.60,490.20 L1025.10,490.10 L1025.60,490.00 L1026.10,489.90 L1026.60,489.80 L1027.10,489.71 L1027.60,489.62 L1028.10,489.52 L1028.60,489.44 L1029.10,489.35 L1029.60,489.27 L1030.10,489.18 L1030.60,489.11 L1031.10,489.03 L1031.60,488.96 L1032.10,488.89 L1032.60,488.82 L1033.10,488.76 L1033.60,488.70 L1034.10,488.64 L1034.60,488.58 L1035.10,488.53 L1035.60,488.48 L1036.10,488.43 L1036.60,488.39 L1037.10,488.35 L1037.60,488.31 L1038.10,488.27 L1038.60,488.24 L1039.10,488.20 L1039.60,488.17 L1040.10,488.15 L1040.60,488.12 L1041.10,488.10 L1041.60,488.08 L1042.10,488.06 L1042.60,488.05 L1043.10,488.03 L1043.60,488.02 L1044.10,488.02 L1044.60,488.01 L1045.10,488.00 L1045.60,488.00 L1046.10,488.00 L1046.60,488.00 L1047.10,488.01 L1047.60,488.01 L1048.10,488.02 L1048.60,488.03 L1049.10,488.04 L1049.60,488.05 L1050.10,488.07 L1050.60,488.09 L1051.10,488.11 L1051.60,488.14 L1052.10,488.17 L1052.60,488.21 L1053.10,488.25 L1053.60,488.29 L1054.10,488.34 L1054.60,488.40 L1055.10,488.46 L1055.60,488.53 L1056.10,488.60 L1056.60,488.68 L1057.10,488.77 L1057.60,488.87 L1058.10,488.97 L1058.60,489.08 L1059.10,489.20 L1059.60,489.33 L1060.10,489.47 L1060.60,489.61 L1061.10,489.77 L1061.60,489.94 L1062.10,490.11 L1062.60,490.30 L1063.10,490.49 L1063.60,490.70 L1064.10,490.92 L1064.60,491.15 L1065.10,491.40 L1065.60,491.65 L1066.10,491.91 L1066.60,492.18 L1067.10,492.46 L1067.60,492.74 L1068.10,493.03 L1068.60,493.33 L1069.10,493.63 L1069.60,493.93 L1070.10,494.23 L1070.60,494.53 L1071.10,494.84 L1071.60,495.14 L1072.10,495.45 L1072.60,495.75 L1073.10,496.05 L1073.60,496.34 L1074.10,496.63 L1074.60,496.91 L1075.10,497.18 L1075.60,497.45 L1076.10,497.71 L1076.60,497.96 L1077.10,498.20 L1077.60,498.43 L1078.10,498.64 L1078.60,498.85 L1079.10,499.04 L1079.60,499.21 L1080.10,499.37 L1080.60,499.51 L1081.10,499.64 L1081.60,499.76 L1082.10,499.85 L1082.60,499.93 L1083.10,499.99 L1083.60,500.04 L1084.10,500.06 L1084.60,500.07 L1085.10,500.06 L1085.60,500.02 L1086.10,499.97 L1086.60,499.89 L1087.10,499.80 L1087.60,499.68 L1088.10,499.54 L1088.60,499.38 L1089.10,499.19 L1089.60,498.99 L1090.10,498.76 L1090.60,498.52 L1091.10,498.26 L1091.60,497.99 L1092.10,497.71 L1092.60,497.41 L1093.10,497.11 L1093.60,496.80 L1094.10,496.48 L1094.60,496.16 L1095.10,495.84 L1095.60,495.52 L1096.10,495.19 L1096.60,494.87 L1097.10,494.54 L1097.60,494.22 L1098.10,493.89 L1098.60,493.57 L1099.10,493.25 L1099.60,492.93 L1100.10,492.61 L1100.60,492.30 L1101.10,491.99 L1101.60,491.69 L1102.10,491.39 L1102.60,491.09 L1103.10,490.80 L1103.60,490.52 L1104.10,490.24 L1104.60,489.97 L1105.10,489.70 L1105.60,489.45 L1106.10,489.20 L1106.60,488.96 L1107.10,488.73 L1107.60,488.52 L1108.10,488.31 L1108.60,488.11 L1109.10,487.92 L1109.60,487.75 L1110.10,487.59 L1110.60,487.44 L1111.10,487.30 L1111.60,487.18 L1112.10,487.07 L1112.60,486.98 L1113.10,486.90 L1113.60,486.84 L1114.10,486.79 L1114.60,486.76 L1115.10,486.75 L1115.60,486.75 L1116.10,486.78 L1116.60,486.82 L1117.10,486.88 L1117.60,486.96 L1118.10,487.06 L1118.60,487.18 L1119.10,487.32 L1119.60,487.49 L1120.10,487.67 L1120.60,487.88 L1121.10,488.11 L1121.60,488.36 L1122.10,488.64 L1122.60,488.94 L1123.10,489.27 L1123.60,489.62 L1124.10,490.00 L1124.60,490.40 L1125.10,490.83 L1125.60,491.29 L1126.10,491.78 L1126.60,492.29 L1127.10,492.84 L1127.60,493.41 L1128.10,494.01 L1128.60,494.65 L1129.10,495.31 L1129.60,496.01 L1130.10,496.73 L1130.60,497.49 L1131.10,498.29 L1131.60,499.11 L1132.10,499.97 L1132.60,500.87 L1133.10,501.80 L1133.60,502.76 L1134.10,503.76 L1134.60,504.80 L1135.10,505.87 L1135.60,506.97 L1136.10,508.09 L1136.60,509.24 L1137.10,510.41 L1137.60,511.59 L1138.10,512.79 L1138.60,514.00 L1139.10,515.21 L1139.60,516.43 L1140.10,517.64 L1140.60,518.86 L1141.10,520.06 L1141.60,521.26 L1142.10,522.46 L1142.60,523.65 L1143.10,524.82 L1143.60,526.00 L1144.10,527.16 L1144.60,528.31 L1145.10,529.45 L1145.60,530.58 L1146.10,531.70 L1146.60,532.81 L1147.10,533.91 L1147.60,534.99 L1148.10,536.05 L1148.60,537.10 L1149.10,538.14 L1149.60,539.16 L1150.10,540.16 L1150.60,541.14 L1151.10,542.11 L1151.60,543.06 L1152.10,543.99 L1152.60,544.89 L1153.10,545.78 L1153.60,546.65 L1154.10,547.49 L1154.60,548.31 L1155.10,549.11 L1155.60,549.88 L1156.10,550.63 L1156.60,551.35 L1157.10,552.04 L1157.60,552.71 L1158.10,553.36 L1158.60,553.98 L1159.10,554.58 L1159.60,555.16 L1160.10,555.72 L1160.60,556.26 L1161.10,556.79 L1161.60,557.30 L1162.10,557.80 L1162.60,558.29 L1163.10,558.76 L1163.60,559.23 L1164.10,559.69 L1164.60,560.15 L1165.10,560.60 L1165.60,561.05 L1166.10,561.49 L1166.60,561.94 L1167.10,562.39 L1167.60,562.84 L1168.10,563.30 L1168.60,563.76 L1169.10,564.23 L1169.60,564.71 L1170.10,565.20 L1170.60,565.70 L1171.10,566.20 L1171.60,566.70 L1172.10,567.20 L1172.60,567.70 L1173.10,568.18 L1173.60,568.66 L1174.10,569.13 L1174.60,569.57 L1175.10,570.00 L1175.60,570.40 L1176.10,570.78 L1176.60,571.14 L1177.10,571.47 L1177.60,571.77 L1178.10,572.05 L1178.60,572.30 L1179.10,572.53 L1179.60,572.74 L1180.10,572.92 L1180.60,573.08 L1181.10,573.21 L1181.60,573.32 L1182.10,573.40 L1182.60,573.46 L1183.10,573.50 L1183.60,573.52 L1184.10,573.51 L1184.60,573.48 L1185.10,573.42 L1185.60,573.34 L1186.10,573.24 L1186.60,573.12 L1187.10,572.98 L1187.60,572.81 L1188.10,572.62 L1188.60,572.41 L1189.10,572.18 L1189.60,571.92 L1190.10,571.64 L1190.60,571.34 L1191.10,571.03 L1191.60,570.68 L1192.10,570.32 L1192.60,569.94 L1193.10,569.54 L1193.60,569.11 L1194.10,568.67 L1194.60,568.20 L1195.10,567.72 L1195.60,567.21 L1196.10,566.68 L1196.60,566.14 L1197.10,565.59 L1197.60,565.03 L1198.10,564.47 L1198.60,563.91 L1199.10,563.36 L1199.60,562.81 L1200.10,562.28 L1200.60,561.77 L1201.10,561.29 L1201.60,560.83 L1202.10,560.40 L1202.60,560.01 L1203.10,559.66 L1203.60,559.36 L1204.10,559.10 L1204.60,558.90 L1205.10,558.76 L1205.60,558.67 L1206.10,558.65 L1206.60,558.68 L1207.10,558.77 L1207.60,558.91 L1208.10,559.10 L1208.60,559.34 L1209.10,559.62 L1209.60,559.95 L1210.10,560.32 L1210.60,560.72 L1211.10,561.16 L1211.60,561.63 L1212.10,562.13 L1212.60,562.66 L1213.10,563.20 L1213.60,563.76 L1214.10,564.34 L1214.60,564.92 L1215.10,565.51 L1215.60,566.11 L1216.10,566.70 L1216.60,567.29 L1217.10,567.87 L1217.60,568.44 L1218.10,568.99 L1218.60,569.53 L1219.10,570.04 L1219.60,570.53 L1220.10,570.99 L1220.60,571.42 L1221.10,571.81 L1221.60,572.16 L1222.10,572.48 L1222.60,572.76 L1223.10,573.01 L1223.60,573.24 L1224.10,573.45 L1224.60,573.64 L1225.10,573.82 L1225.60,573.98 L1226.10,574.14 L1226.60,574.29 L1227.10,574.44 L1227.60,574.60 L1228.10,574.76 L1228.60,574.93 L1229.10,575.12 L1229.60,575.32 L1230.10,575.55 L1230.60,575.78 L1231.10,576.04 L1231.60,576.31 L1232.10,576.60 L1232.60,576.90 L1233.10,577.21 L1233.60,577.54 L1234.10,577.87 L1234.60,578.22 L1235.10,578.58 L1235.60,578.95 L1236.10,579.32 L1236.60,579.71 L1237.10,580.10 L1237.60,580.50 L1238.10,580.90 L1238.60,581.31 L1239.10,581.72 L1239.60,582.14 L1240.10,582.56 L1240.60,582.98 L1241.10,583.40 L1241.60,583.82 L1242.10,584.24 L1242.60,584.66 L1243.10,585.08 L1243.60,585.50 L1244.10,585.91 L1244.60,586.32 L1245.10,586.72 L1245.60,587.12 L1246.10,587.51 L1246.60,587.90 L1247.10,588.27 L1247.60,588.64 L1248.10,589.00 L1248.60,589.35 L1249.10,589.68 L1249.60,590.01 L1250.10,590.31 L1250.60,590.60 L1251.10,590.87 L1251.60,591.11 L1252.10,591.32 L1252.60,591.51 L1253.10,591.67 L1253.60,591.79 L1254.10,591.87 L1254.60,591.91 L1255.10,591.91 L1255.60,591.87 L1256.10,591.79 L1256.60,591.67 L1257.10,591.51 L1257.60,591.33 L1258.10,591.11 L1258.60,590.87 L1259.10,590.60 L1259.60,590.32 L1260.10,590.02 L1260.60,589.70 L1261.10,589.37 L1261.60,589.04 L1262.10,588.69 L1262.60,588.35 L1263.10,588.01 L1263.60,587.67 L1264.10,587.33 L1264.60,587.00 L1265.10,586.68 L1265.60,586.36 L1266.10,586.04 L1266.60,585.74 L1267.10,585.44 L1267.60,585.15 L1268.10,584.88 L1268.60,584.61 L1269.10,584.35 L1269.60,584.10 L1270.10,583.87 L1270.60,583.64 L1271.10,583.44 L1271.60,583.24 L1272.10,583.06 L1272.60,582.90 L1273.10,582.75 L1273.60,582.61 L1274.10,582.50 L1274.60,582.40 L1275.10,582.32 L1275.60,582.26 L1276.10,582.22 L1276.60,582.19 L1277.10,582.18 L1277.60,582.19 L1278.10,582.21 L1278.60,582.24 L1279.10,582.29 L1279.60,582.34 L1280.10,582.41 L1280.60,582.48 L1281.10,582.56 L1281.60,582.65 L1282.10,582.75 L1282.60,582.85 L1283.10,582.95 L1283.60,583.05 L1284.10,583.16 L1284.60,583.26 L1285.10,583.37 L1285.60,583.47 L1286.10,583.57 L1286.60,583.66 L1287.10,583.75 L1287.60,583.84 L1288.10,583.92 L1288.60,583.99 L1289.10,584.06 L1289.60,584.12 L1290.10,584.18 L1290.60,584.24 L1291.10,584.29 L1291.60,584.35 L1292.10,584.40 L1292.60,584.46 L1293.10,584.51 L1293.60,584.57 L1294.10,584.63 L1294.60,584.70 L1295.10,584.77 L1295.60,584.84 L1296.10,584.92 L1296.60,585.00 L1297.10,585.10 L1297.60,585.20 L1298.10,585.31 L1298.60,585.42 L1299.10,585.55 L1299.60,585.69 L1300.10,585.84 L1300.60,586.01 L1301.10,586.18 L1301.60,586.37 L1302.10,586.57 L1302.60,586.78 L1303.10,587.01 L1303.60,587.26 L1304.10,587.52 L1304.60,587.80 L1305.10,588.09 L1305.60,588.40 L1306.10,588.73 L1306.60,589.07 L1307.10,589.44 L1307.60,589.82 L1308.10,590.23 L1308.60,590.65 L1309.10,591.10 L1309.60,591.57 L1310.10,592.05 L1310.60,592.57 L1311.10,593.10 L1311.60,593.66 L1312.10,594.24 L1312.60,594.85 L1313.10,595.49 L1313.60,596.15 L1314.10,596.83 L1314.60,597.54 L1315.10,598.28 L1315.60,599.04 L1316.10,599.83 L1316.60,600.64 L1317.10,601.48 L1317.60,602.33 L1318.10,603.21 L1318.60,604.10 L1319.10,605.01 L1319.60,605.95 L1320.10,606.90 L1320.60,607.86 L1321.10,608.84 L1321.60,609.84 L1322.10,610.85 L1322.60,611.87 L1323.10,612.91 L1323.60,613.95 L1324.10,615.01 L1324.60,616.07 L1325.10,617.15 L1325.60,618.23 L1326.10,619.32 L1326.60,620.43 L1327.10,621.54 L1327.60,622.66 L1328.10,623.80 L1328.60,624.95 L1329.10,626.11 L1329.60,627.28 L1330.10,628.47 L1330.60,629.67 L1331.10,630.89 L1331.60,632.11 L1332.10,633.34 L1332.60,634.56 L1333.10,635.78 L1333.60,637.00 L1334.10,638.20 L1334.60,639.38 L1335.10,640.55 L1335.60,641.69 L1336.10,642.80 L1336.60,643.88 L1337.10,644.92 L1337.60,645.92 L1338.10,646.88 L1338.60,647.79 L1339.10,648.65 L1339.60,649.46 L1340.10,650.20 L1340.60,650.88 L1341.10,651.49 L1341.60,652.03 L1342.10,652.51 L1342.60,652.92 L1343.10,653.26 L1343.60,653.55 L1344.10,653.79 L1344.60,653.97 L1345.10,654.10 L1345.60,654.19 L1346.10,654.23 L1346.60,654.24 L1347.10,654.20 L1347.60,654.13 L1348.10,654.03 L1348.60,653.91 L1349.10,653.75 L1349.60,653.58 L1350.10,653.39 L1350.60,653.18 L1351.10,652.96 L1351.60,652.72 L1352.10,652.48 L1352.60,652.24 L1353.10,652.00 L1353.60,651.76 L1354.10,651.51 L1354.60,651.27 L1355.10,651.03 L1355.60,650.79 L1356.10,650.56 L1356.60,650.33 L1357.10,650.10 L1357.60,649.88 L1358.10,649.66 L1358.60,649.44 L1359.10,649.23 L1359.60,649.03 L1360.10,648.83 L1360.60,648.64 L1361.10,648.46 L1361.60,648.28 L1362.10,648.12 L1362.60,647.96 L1363.10,647.81 L1363.60,647.67 L1364.10,647.54 L1364.60,647.42 L1365.10,647.32 L1365.60,647.22 L1366.10,647.14 L1366.60,647.07 L1367.10,647.01 L1367.60,646.96 L1368.10,646.93 L1368.60,646.92 L1369.10,646.92 L1369.60,646.93 L1370.10,646.96 L1370.60,647.00 L1371.10,647.07 L1371.60,647.15 L1372.10,647.24 L1372.60,647.36 L1373.10,647.49 L1373.60,647.65 L1373.90,647.75" fill="none" stroke="#848484" stroke-width="2" stroke-linejoin="round" stroke-linecap="round"/>
<path d="M237.70,541.73 L238.20,541.00 L238.70,540.28 L239.20,539.56 L239.70,538.84 L240.20,538.12 L240.70,537.40 L241.20,536.68 L241.70,535.97 L242.20,535.25 L242.70,534.54 L243.20,533.82 L243.70,533.11 L244.20,532.40 L244.70,531.69 L245.20,530.98 L245.70,530.27 L246.20,529.57 L246.70,528.86 L247.20,528.15 L247.70,527.45 L248.20,526.75 L248.70,526.04 L249.20,525.34 L249.70,524.64 L250.20,523.94 L250.70,523.24 L251.20,522.54 L251.70,521.85 L252.20,521.15 L252.70,520.46 L253.20,519.76 L253.70,519.07 L254.20,518.37 L254.70,517.68 L255.20,516.99 L255.70,516.30 L256.20,515.61 L256.70,514.92 L257.20,514.23 L257.70,513.55 L258.20,512.86 L258.70,512.17 L259.20,511.49 L259.70,510.81 L260.20,510.12 L260.70,509.44 L261.20,508.76 L261.70,508.08 L262.20,507.40 L262.70,506.72 L263.20,506.04 L263.70,505.36 L264.20,504.68 L264.70,504.00 L265.20,503.33 L265.70,502.65 L266.20,501.98 L266.70,501.30 L267.20,500.63 L267.70,499.96 L268.20,499.29 L268.70,498.61 L269.20,497.94 L269.70,497.27 L270.20,496.60 L270.70,495.93 L271.20,495.26 L271.70,494.60 L272.20,493.93 L272.70,493.26 L273.20,492.60 L273.70,491.93 L274.20,491.26 L274.70,490.60 L275.20,489.94 L275.70,489.27 L276.20,488.61 L276.70,487.95 L277.20,487.28 L277.70,486.62 L278.20,485.96 L278.70,485.30 L279.20,484.64 L279.70,483.98 L280.20,483.32 L280.70,482.66 L281.20,482.00 L281.70,481.35 L282.20,480.69 L282.70,480.03 L283.20,479.38 L283.70,478.72 L284.20,478.06 L284.70,477.41 L285.20,476.75 L285.70,476.10 L286.20,475.44 L286.70,474.79 L287.20,474.14 L287.70,473.48 L288.20,472.83 L288.70,472.18 L289.20,471.53 L289.70,470.87 L290.20,470.22 L290.70,469.57 L291.20,468.92 L291.70,468.27 L292.20,467.62 L292.70,466.97 L293.20,466.32 L293.70,465.67 L294.20,465.02 L294.70,464.37 L295.20,463.72 L295.70,463.07 L296.20,462.42 L296.70,461.78 L297.20,461.13 L297.70,460.48 L298.20,459.83 L298.70,459.18 L299.20,458.54 L299.70,457.89 L300.20,457.24 L300.70,456.60 L301.20,455.95 L301.70,455.30 L302.20,454.66 L302.70,454.01 L303.20,453.36 L303.70,452.72 L304.20,452.07 L304.70,451.43 L305.20,450.78 L305.70,450.13 L306.20,449.49 L306.70,448.84 L307.20,448.20 L307.70,447.55 L308.20,446.91 L308.70,446.26 L309.20,445.62 L309.70,444.97 L310.20,444.33 L310.70,443.68 L311.20,443.04 L311.70,442.39 L312.20,441.74 L312.70,441.10 L313.20,440.45 L313.70,439.81 L314.20,439.16 L314.70,438.52 L315.20,437.87 L315.70,437.23 L316.20,436.58 L316.70,435.94 L317.20,435.29 L317.70,434.64 L318.20,434.00 L318.70,433.35 L319.20,432.70 L319.70,432.06 L320.20,431.41 L320.70,430.77 L321.20,430.12 L321.70,429.47 L322.20,428.82 L322.70,428.18 L323.20,427.53 L323.70,426.88 L324.20,426.23 L324.70,425.59 L325.20,424.94 L325.70,424.29 L326.20,423.64 L326.70,422.99 L327.20,422.34 L327.70,421.69 L328.20,421.04 L328.70,420.39 L329.20,419.74 L329.70,419.09 L330.20,418.44 L330.70,417.79 L331.20,417.14 L331.70,416.49 L332.20,415.84 L332.70,415.19 L333.20,414.54 L333.70,413.89 L334.20,413.24 L334.70,412.59 L335.20,411.94 L335.70,411.29 L336.20,410.64 L336.70,409.99 L337.20,409.33 L337.70,408.68 L338.20,408.03 L338.70,407.38 L339.20,406.73 L339.70,406.08 L340.20,405.43 L340.70,404.78 L341.20,404.12 L341.70,403.47 L342.20,402.82 L342.70,402.17 L343.20,401.52 L343.70,400.87 L344.20,400.22 L344.70,399.57 L345.20,398.92 L345.70,398.27 L346.20,397.62 L346.70,396.96 L347.20,396.31 L347.70,395.66 L348.20,395.01 L348.70,394.36 L349.20,393.71 L349.70,393.06 L350.20,392.41 L350.70,391.76 L351.20,391.12 L351.70,390.47 L352.20,389.82 L352.70,389.17 L353.20,388.52 L353.70,387.87 L354.20,387.22 L354.70,386.57 L355.20,385.93 L355.70,385.28 L356.20,384.63 L356.70,383.98 L357.20,383.34 L357.70,382.69 L358.20,382.04 L358.70,381.40 L359.20,380.75 L359.70,380.11 L360.20,379.46 L360.70,378.82 L361.20,378.17 L361.70,377.53 L362.20,376.88 L362.70,376.24 L363.20,375.60 L363.70,374.95 L364.20,374.31 L364.70,373.67 L365.20,373.03 L365.70,372.38 L366.20,371.74 L366.70,371.10 L367.20,370.46 L367.70,369.82 L368.20,369.18 L368.70,368.54 L369.20,367.90 L369.70,367.26 L370.20,366.63 L370.70,365.99 L371.20,365.35 L371.70,364.71 L372.20,364.08 L372.70,363.44 L373.20,362.81 L373.70,362.17 L374.20,361.54 L374.70,360.90 L375.20,360.27 L375.70,359.64 L376.20,359.00 L376.70,358.37 L377.20,357.74 L377.70,357.11 L378.20,356.48 L378.70,355.85 L379.20,355.22 L379.70,354.59 L380.20,353.96 L380.70,353.34 L381.20,352.71 L381.70,352.08 L382.20,351.46 L382.70,350.83 L383.20,350.21 L383.70,349.58 L384.20,348.96 L384.70,348.34 L385.20,347.72 L385.70,347.09 L386.20,346.47 L386.70,345.85 L387.20,345.23 L387.70,344.61 L388.20,344.00 L388.70,343.38 L389.20,342.76 L389.70,342.15 L390.20,341.53 L390.70,340.92 L391.20,340.30 L391.70,339.69 L392.20,339.08 L392.70,338.47 L393.20,337.85 L393.70,337.24 L394.20,336.63 L394.70,336.03 L395.20,335.42 L395.70,334.81 L396.20,334.21 L396.70,333.60 L397.20,333.00 L397.70,332.40 L398.20,331.80 L398.70,331.21 L399.20,330.62 L399.70,330.03 L400.20,329.44 L400.70,328.86 L401.20,328.27 L401.70,327.70 L402.20,327.12 L402.70,326.55 L403.20,325.99 L403.70,325.42 L404.20,324.87 L404.70,324.31 L405.20,323.77 L405.70,323.22 L406.20,322.69 L406.70,322.15 L407.20,321.63 L407.70,321.10 L408.20,320.59 L408.70,320.08 L409.20,319.57 L409.70,319.07 L410.20,318.58 L410.70,318.09 L411.20,317.61 L411.70,317.13 L412.20,316.65 L412.70,316.18 L413.20,315.72 L413.70,315.26 L414.20,314.80 L414.70,314.35 L415.20,313.90 L415.70,313.46 L416.20,313.02 L416.70,312.58 L417.20,312.15 L417.70,311.72 L418.20,311.30 L418.70,310.87 L419.20,310.46 L419.70,310.04 L420.20,309.63 L420.70,309.22 L421.20,308.82 L421.70,308.41 L422.20,308.02 L422.70,307.62 L423.20,307.22 L423.70,306.83 L424.20,306.44 L424.70,306.06 L425.20,305.67 L425.70,305.29 L426.20,304.91 L426.70,304.53 L427.20,304.15 L427.70,303.78 L428.20,303.40 L428.70,303.03 L429.20,302.66 L429.70,302.29 L430.20,301.92 L430.70,301.56 L431.20,301.19 L431.70,300.83 L432.20,300.47 L432.70,300.11 L433.20,299.75 L433.70,299.40 L434.20,299.05 L434.70,298.70 L435.20,298.35 L435.70,298.01 L436.20,297.67 L436.70,297.33 L437.20,296.99 L437.70,296.66 L438.20,296.33 L438.70,296.00 L439.20,295.68 L439.70,295.36 L440.20,295.04 L440.70,294.73 L441.20,294.42 L441.70,294.12 L442.20,293.81 L442.70,293.52 L443.20,293.22 L443.70,292.93 L444.20,292.65 L444.70,292.37 L445.20,292.09 L445.70,291.82 L446.20,291.55 L446.70,291.29 L447.20,291.03 L447.70,290.78 L448.20,290.53 L448.70,290.29 L449.20,290.05 L449.70,289.82 L450.20,289.59 L450.70,289.37 L451.20,289.15 L451.70,288.94 L452.20,288.73 L452.70,288.53 L453.20,288.34 L453.70,288.15 L454.20,287.97 L454.70,287.79 L455.20,287.62 L455.70,287.45 L456.20,287.30 L456.70,287.14 L457.20,287.00 L457.70,286.86 L458.20,286.73 L458.70,286.60 L459.20,286.48 L459.70,286.37 L460.20,286.27 L460.70,286.17 L461.20,286.08 L461.70,285.99 L462.20,285.92 L462.70,285.85 L463.20,285.79 L463.70,285.73 L464.20,285.69 L464.70,285.65 L465.20,285.62 L465.70,285.59 L466.20,285.58 L466.70,285.57 L467.20,285.56 L467.70,285.57 L468.20,285.58 L468.70,285.60 L469.20,285.62 L469.70,285.65 L470.20,285.68 L470.70,285.72 L471.20,285.77 L471.70,285.82 L472.20,285.88 L472.70,285.93 L473.20,286.00 L473.70,286.07 L474.20,286.14 L474.70,286.21 L475.20,286.29 L475.70,286.37 L476.20,286.46 L476.70,286.54 L477.20,286.63 L477.70,286.72 L478.20,286.82 L478.70,286.91 L479.20,287.01 L479.70,287.11 L480.20,287.21 L480.70,287.31 L481.20,287.41 L481.70,287.51 L482.20,287.61 L482.70,287.72 L483.20,287.82 L483.70,287.92 L484.20,288.02 L484.70,288.12 L485.20,288.22 L485.70,288.31 L486.20,288.41 L486.70,288.50 L487.20,288.59 L487.70,288.68 L488.20,288.77 L488.70,288.86 L489.20,288.94 L489.70,289.02 L490.20,289.09 L490.70,289.17 L491.20,289.24 L491.70,289.30 L492.20,289.37 L492.70,289.43 L493.20,289.48 L493.70,289.53 L494.20,289.58 L494.70,289.62 L495.20,289.66 L495.70,289.69 L496.20,289.72 L496.70,289.75 L497.20,289.76 L497.70,289.78 L498.20,289.78 L498.70,289.79 L499.20,289.78 L499.70,289.77 L500.20,289.76 L500.70,289.73 L501.20,289.70 L501.70,289.67 L502.20,289.62 L502.70,289.57 L503.20,289.52 L503.70,289.45 L504.20,289.38 L504.70,289.30 L505.20,289.21 L505.70,289.12 L506.20,289.01 L506.70,288.90 L507.20,288.78 L507.70,288.65 L508.20,288.51 L508.70,288.37 L509.20,288.21 L509.70,288.05 L510.20,287.87 L510.70,287.69 L511.20,287.51 L511.70,287.31 L512.20,287.11 L512.70,286.90 L513.20,286.68 L513.70,286.46 L514.20,286.23 L514.70,285.99 L515.20,285.75 L515.70,285.50 L516.20,285.25 L516.70,284.99 L517.20,284.73 L517.70,284.46 L518.20,284.19 L518.70,283.92 L519.20,283.64 L519.70,283.35 L520.20,283.07 L520.70,282.78 L521.20,282.48 L521.70,282.19 L522.20,281.89 L522.70,281.59 L523.20,281.28 L523.70,280.98 L524.20,280.67 L524.70,280.36 L525.20,280.05 L525.70,279.74 L526.20,279.44 L526.70,279.13 L527.20,278.82 L527.70,278.52 L528.20,278.22 L528.70,277.92 L529.20,277.62 L529.70,277.33 L530.20,277.04 L530.70,276.76 L531.20,276.48 L531.70,276.21 L532.20,275.94 L532.70,275.69 L533.20,275.44 L533.70,275.19 L534.20,274.96 L534.70,274.73 L535.20,274.51 L535.70,274.31 L536.20,274.11 L536.70,273.93 L537.20,273.75 L537.70,273.59 L538.20,273.44 L538.70,273.30 L539.20,273.18 L539.70,273.07 L540.20,272.97 L540.70,272.89 L541.20,272.83 L541.70,272.78 L542.20,272.75 L542.70,272.73 L543.20,272.73 L543.70,272.75 L544.20,272.78 L544.70,272.83 L545.20,272.89 L545.70,272.97 L546.20,273.07 L546.70,273.17 L547.20,273.29 L547.70,273.43 L548.20,273.57 L548.70,273.73 L549.20,273.90 L549.70,274.07 L550.20,274.26 L550.70,274.46 L551.20,274.67 L551.70,274.89 L552.20,275.11 L552.70,275.34 L553.20,275.58 L553.70,275.83 L554.20,276.08 L554.70,276.34 L555.20,276.60 L555.70,276.87 L556.20,277.14 L556.70,277.42 L557.20,277.69 L557.70,277.98 L558.20,278.26 L558.70,278.54 L559.20,278.83 L559.70,279.12 L560.20,279.41 L560.70,279.69 L561.20,279.98 L561.70,280.27 L562.20,280.55 L562.70,280.83 L563.20,281.11 L563.70,281.38 L564.20,281.65 L564.70,281.92 L565.20,282.18 L565.70,282.44 L566.20,282.69 L566.70,282.94 L567.20,283.17 L567.70,283.41 L568.20,283.63 L568.70,283.85 L569.20,284.06 L569.70,284.26 L570.20,284.45 L570.70,284.64 L571.20,284.81 L571.70,284.98 L572.20,285.14 L572.70,285.29 L573.20,285.42 L573.70,285.55 L574.20,285.67 L574.70,285.78 L575.20,285.87 L575.70,285.96 L576.20,286.03 L576.70,286.09 L577.20,286.14 L577.70,286.17 L578.20,286.20 L578.70,286.21 L579.20,286.20 L579.70,286.19 L580.20,286.16 L580.70,286.11 L581.20,286.05 L581.70,285.98 L582.20,285.89 L582.70,285.78 L583.20,285.66 L583.70,285.53 L584.20,285.37 L584.70,285.20 L585.20,285.02 L585.70,284.82 L586.20,284.60 L586.70,284.36 L587.20,284.12 L587.70,283.85 L588.20,283.58 L588.70,283.29 L589.20,282.99 L589.70,282.68 L590.20,282.36 L590.70,282.02 L591.20,281.68 L591.70,281.33 L592.20,280.97 L592.70,280.61 L593.20,280.24 L593.70,279.86 L594.20,279.48 L594.70,279.09 L595.20,278.70 L595.70,278.30 L596.20,277.91 L596.70,277.51 L597.20,277.11 L597.70,276.70 L598.20,276.30 L598.70,275.90 L599.20,275.50 L599.70,275.11 L600.20,274.71 L600.70,274.32 L601.20,273.93 L601.70,273.54 L602.20,273.15 L602.70,272.77 L603.20,272.38 L603.70,272.00 L604.20,271.62 L604.70,271.25 L605.20,270.87 L605.70,270.50 L606.20,270.13 L606.70,269.76 L607.20,269.40 L607.70,269.03 L608.20,268.67 L608.70,268.31 L609.20,267.96 L609.70,267.60 L610.20,267.25 L610.70,266.91 L611.20,266.56 L611.70,266.22 L612.20,265.88 L612.70,265.54 L613.20,265.20 L613.70,264.87 L614.20,264.54 L614.70,264.21 L615.20,263.89 L615.70,263.57 L616.20,263.25 L616.70,262.94 L617.20,262.62 L617.70,262.31 L618.20,262.01 L618.70,261.70 L619.20,261.40 L619.70,261.11 L620.20,260.81 L620.70,260.52 L621.20,260.23 L621.70,259.95 L622.20,259.67 L622.70,259.39 L623.20,259.12 L623.70,258.84 L624.20,258.58 L624.70,258.31 L625.20,258.05 L625.70,257.79 L626.20,257.54 L626.70,257.29 L627.20,257.05 L627.70,256.81 L628.20,256.58 L628.70,256.36 L629.20,256.15 L629.70,255.95 L630.20,255.76 L630.70,255.59 L631.20,255.43 L631.70,255.29 L632.20,255.17 L632.70,255.06 L633.20,254.98 L633.70,254.92 L634.20,254.88 L634.70,254.87 L635.20,254.88 L635.70,254.92 L636.20,254.98 L636.70,255.08 L637.20,255.20 L637.70,255.36 L638.20,255.55 L638.70,255.78 L639.20,256.03 L639.70,256.33 L640.20,256.67 L640.70,257.04 L641.20,257.44 L641.70,257.88 L642.20,258.34 L642.70,258.84 L643.20,259.36 L643.70,259.90 L644.20,260.46 L644.70,261.04 L645.20,261.64 L645.70,262.24 L646.20,262.86 L646.70,263.49 L647.20,264.13 L647.70,264.77 L648.20,265.42 L648.70,266.07 L649.20,266.72 L649.70,267.38 L650.20,268.04 L650.70,268.70 L651.20,269.37 L651.70,270.03 L652.20,270.70 L652.70,271.37 L653.20,272.04 L653.70,272.71 L654.20,273.38 L654.70,274.06 L655.20,274.72 L655.70,275.39 L656.20,276.06 L656.70,276.72 L657.20,277.38 L657.70,278.04 L658.20,278.70 L658.70,279.35 L659.20,280.00 L659.70,280.64 L660.20,281.27 L660.70,281.88 L661.20,282.48 L661.70,283.06 L662.20,283.62 L662.70,284.14 L663.20,284.63 L663.70,285.09 L664.20,285.50 L664.70,285.87 L665.20,286.19 L665.70,286.46 L666.20,286.68 L666.70,286.87 L667.20,287.01 L667.70,287.11 L668.20,287.18 L668.70,287.22 L669.20,287.24 L669.70,287.23 L670.20,287.19 L670.70,287.14 L671.20,287.08 L671.70,287.00 L672.20,286.92 L672.70,286.83 L673.20,286.73 L673.70,286.64 L674.20,286.55 L674.70,286.47 L675.20,286.40 L675.70,286.35 L676.20,286.31 L676.70,286.29 L677.20,286.29 L677.70,286.30 L678.20,286.33 L678.70,286.38 L679.20,286.44 L679.70,286.52 L680.20,286.61 L680.70,286.71 L681.20,286.83 L681.70,286.96 L682.20,287.10 L682.70,287.25 L683.20,287.41 L683.70,287.58 L684.20,287.76 L684.70,287.95 L685.20,288.14 L685.70,288.35 L686.20,288.56 L686.70,288.77 L687.20,288.99 L687.70,289.22 L688.20,289.44 L688.70,289.68 L689.20,289.91 L689.70,290.15 L690.20,290.38 L690.70,290.62 L691.20,290.86 L691.70,291.09 L692.20,291.33 L692.70,291.56 L693.20,291.80 L693.70,292.02 L694.20,292.25 L694.70,292.47 L695.20,292.68 L695.70,292.89 L696.20,293.09 L696.70,293.29 L697.20,293.48 L697.70,293.66 L698.20,293.84 L698.70,294.01 L699.20,294.16 L699.70,294.31 L700.20,294.46 L700.70,294.59 L701.20,294.71 L701.70,294.82 L702.20,294.92 L702.70,295.01 L703.20,295.09 L703.70,295.16 L704.20,295.22 L704.70,295.26 L705.20,295.29 L705.70,295.31 L706.20,295.32 L706.70,295.31 L707.20,295.28 L707.70,295.25 L708.20,295.20 L708.70,295.13 L709.20,295.05 L709.70,294.95 L710.20,294.83 L710.70,294.70 L711.20,294.55 L711.70,294.39 L712.20,294.20 L712.70,294.00 L713.20,293.78 L713.70,293.54 L714.20,293.28 L714.70,293.01 L715.20,292.71 L715.70,292.39 L716.20,292.05 L716.70,291.69 L717.20,291.31 L717.70,290.91 L718.20,290.49 L718.70,290.04 L719.20,289.57 L719.70,289.08 L720.20,288.56 L720.70,288.02 L721.20,287.46 L721.70,286.87 L722.20,286.26 L722.70,285.63 L723.20,284.98 L723.70,284.31 L724.20,283.62 L724.70,282.91 L725.20,282.19 L725.70,281.46 L726.20,280.71 L726.70,279.95 L727.20,279.18 L727.70,278.40 L728.20,277.62 L728.70,276.83 L729.20,276.03 L729.70,275.23 L730.20,274.42 L730.70,273.62 L731.20,272.81 L731.70,272.01 L732.20,271.21 L732.70,270.41 L733.20,269.61 L733.70,268.83 L734.20,268.05 L734.70,267.28 L735.20,266.51 L735.70,265.76 L736.20,265.02 L736.70,264.30 L737.20,263.59 L737.70,262.89 L738.20,262.22 L738.70,261.56 L739.20,260.92 L739.70,260.30 L740.20,259.71 L740.70,259.14 L741.20,258.59 L741.70,258.07 L742.20,257.58 L742.70,257.11 L743.20,256.68 L743.70,256.27 L744.20,255.90 L744.70,255.56 L745.20,255.26 L745.70,254.99 L746.20,254.76 L746.70,254.57 L747.20,254.42 L747.70,254.31 L748.20,254.24 L748.70,254.21 L749.20,254.23 L749.70,254.29 L750.20,254.40 L750.70,254.54 L751.20,254.72 L751.70,254.93 L752.20,255.18 L752.70,255.46 L753.20,255.77 L753.70,256.10 L754.20,256.47 L754.70,256.86 L755.20,257.27 L755.70,257.70 L756.20,258.15 L756.70,258.62 L757.20,259.11 L757.70,259.61 L758.20,260.12 L758.70,260.64 L759.20,261.18 L759.70,261.71 L760.20,262.26 L760.70,262.81 L761.20,263.36 L761.70,263.90 L762.20,264.45 L762.70,265.00 L763.20,265.54 L763.70,266.07 L764.20,266.59 L764.70,267.10 L765.20,267.60 L765.70,268.09 L766.20,268.56 L766.70,269.01 L767.20,269.45 L767.70,269.87 L768.20,270.27 L768.70,270.66 L769.20,271.03 L769.70,271.38 L770.20,271.72 L770.70,272.04 L771.20,272.34 L771.70,272.63 L772.20,272.90 L772.70,273.16 L773.20,273.40 L773.70,273.62 L774.20,273.82 L774.70,274.01 L775.20,274.19 L775.70,274.34 L776.20,274.48 L776.70,274.61 L777.20,274.71 L777.70,274.81 L778.20,274.88 L778.70,274.94 L779.20,274.98 L779.70,275.01 L780.20,275.02 L780.70,275.01 L781.20,274.99 L781.70,274.95 L782.20,274.90 L782.70,274.83 L783.20,274.74 L783.70,274.64 L784.20,274.52 L784.70,274.38 L785.20,274.23 L785.70,274.06 L786.20,273.88 L786.70,273.68 L787.20,273.47 L787.70,273.24 L788.20,273.00 L788.70,272.76 L789.20,272.50 L789.70,272.23 L790.20,271.96 L790.70,271.68 L791.20,271.40 L791.70,271.11 L792.20,270.82 L792.70,270.53 L793.20,270.25 L793.70,269.96 L794.20,269.68 L794.70,269.40 L795.20,269.12 L795.70,268.85 L796.20,268.60 L796.70,268.34 L797.20,268.10 L797.70,267.88 L798.20,267.66 L798.70,267.46 L799.20,267.27 L799.70,267.10 L800.20,266.95 L800.70,266.82 L801.20,266.71 L801.70,266.61 L802.20,266.55 L802.70,266.50 L803.20,266.48 L803.70,266.49 L804.20,266.51 L804.70,266.57 L805.20,266.64 L805.70,266.74 L806.20,266.85 L806.70,266.99 L807.20,267.14 L807.70,267.32 L808.20,267.51 L808.70,267.71 L809.20,267.94 L809.70,268.17 L810.20,268.42 L810.70,268.69 L811.20,268.97 L811.70,269.25 L812.20,269.55 L812.70,269.86 L813.20,270.18 L813.70,270.50 L814.20,270.84 L814.70,271.18 L815.20,271.52 L815.70,271.87 L816.20,272.23 L816.70,272.58 L817.20,272.94 L817.70,273.31 L818.20,273.67 L818.70,274.03 L819.20,274.40 L819.70,274.76 L820.20,275.12 L820.70,275.49 L821.20,275.84 L821.70,276.20 L822.20,276.55 L822.70,276.90 L823.20,277.24 L823.70,277.58 L824.20,277.91 L824.70,278.24 L825.20,278.55 L825.70,278.86 L826.20,279.16 L826.70,279.45 L827.20,279.74 L827.70,280.01 L828.20,280.27 L828.70,280.51 L829.20,280.75 L829.70,280.97 L830.20,281.18 L830.70,281.38 L831.20,281.56 L831.70,281.72 L832.20,281.87 L832.70,282.00 L833.20,282.12 L833.70,282.21 L834.20,282.29 L834.70,282.35 L835.20,282.39 L835.70,282.40 L836.20,282.40 L836.70,282.38 L837.20,282.33 L837.70,282.27 L838.20,282.19 L838.70,282.09 L839.20,281.99 L839.70,281.87 L840.20,281.75 L840.70,281.62 L841.20,281.49 L841.70,281.36 L842.20,281.23 L842.70,281.10 L843.20,280.98 L843.70,280.87 L844.20,280.77 L844.70,280.69 L845.20,280.61 L845.70,280.56 L846.20,280.52 L846.70,280.51 L847.20,280.52 L847.70,280.56 L848.20,280.62 L848.70,280.72 L849.20,280.85 L849.70,281.02 L850.20,281.22 L850.70,281.46 L851.20,281.74 L851.70,282.07 L852.20,282.44 L852.70,282.85 L853.20,283.30 L853.70,283.78 L854.20,284.30 L854.70,284.83 L855.20,285.40 L855.70,285.98 L856.20,286.58 L856.70,287.20 L857.20,287.82 L857.70,288.46 L858.20,289.10 L858.70,289.74 L859.20,290.38 L859.70,291.01 L860.20,291.63 L860.70,292.25 L861.20,292.85 L861.70,293.43 L862.20,293.99 L862.70,294.52 L863.20,295.03 L863.70,295.51 L864.20,295.95 L864.70,296.36 L865.20,296.73 L865.70,297.05 L866.20,297.34 L866.70,297.58 L867.20,297.78 L867.70,297.93 L868.20,298.04 L868.70,298.11 L869.20,298.13 L869.70,298.11 L870.20,298.05 L870.70,297.93 L871.20,297.78 L871.70,297.57 L872.20,297.32 L872.70,297.02 L873.20,296.67 L873.70,296.28 L874.20,295.84 L874.70,295.34 L875.20,294.80 L875.70,294.21 L876.20,293.58 L876.70,292.91 L877.20,292.21 L877.70,291.48 L878.20,290.73 L878.70,289.96 L879.20,289.19 L879.70,288.40 L880.20,287.62 L880.70,286.84 L881.20,286.06 L881.70,285.31 L882.20,284.57 L882.70,283.85 L883.20,283.15 L883.70,282.47 L884.20,281.81 L884.70,281.17 L885.20,280.55 L885.70,279.94 L886.20,279.36 L886.70,278.80 L887.20,278.26 L887.70,277.74 L888.20,277.24 L888.70,276.76 L889.20,276.30 L889.70,275.86 L890.20,275.45 L890.70,275.05 L891.20,274.69 L891.70,274.34 L892.20,274.03 L892.70,273.74 L893.20,273.47 L893.70,273.23 L894.20,273.02 L894.70,272.84 L895.20,272.69 L895.70,272.56 L896.20,272.47 L896.70,272.41 L897.20,272.37 L897.70,272.38 L898.20,272.41 L898.70,272.47 L899.20,272.55 L899.70,272.67 L900.20,272.81 L900.70,272.97 L901.20,273.15 L901.70,273.35 L902.20,273.57 L902.70,273.80 L903.20,274.05 L903.70,274.32 L904.20,274.59 L904.70,274.88 L905.20,275.17 L905.70,275.48 L906.20,275.78 L906.70,276.09 L907.20,276.41 L907.70,276.72 L908.20,277.03 L908.70,277.34 L909.20,277.65 L909.70,277.95 L910.20,278.24 L910.70,278.53 L911.20,278.80 L911.70,279.07 L912.20,279.32 L912.70,279.55 L913.20,279.77 L913.70,279.97 L914.20,280.15 L914.70,280.31 L915.20,280.45 L915.70,280.56 L916.20,280.64 L916.70,280.70 L917.20,280.71 L917.70,280.68 L918.20,280.59 L918.70,280.44 L919.20,280.21 L919.70,279.92 L920.20,279.53 L920.70,279.05 L921.20,278.48 L921.70,277.80 L922.20,277.02 L922.70,276.17 L923.20,275.25 L923.70,274.29 L924.20,273.29 L924.70,272.28 L925.20,271.26 L925.70,270.25 L926.20,269.26 L926.70,268.31 L927.20,267.39 L927.70,266.51 L928.20,265.66 L928.70,264.84 L929.20,264.05 L929.70,263.28 L930.20,262.55 L930.70,261.85 L931.20,261.17 L931.70,260.52 L932.20,259.90 L932.70,259.30 L933.20,258.73 L933.70,258.20 L934.20,257.70 L934.70,257.24 L935.20,256.82 L935.70,256.44 L936.20,256.09 L936.70,255.78 L937.20,255.49 L937.70,255.23 L938.20,254.99 L938.70,254.76 L939.20,254.54 L939.70,254.33 L940.20,254.11 L940.70,253.89 L941.20,253.67 L941.70,253.43 L942.20,253.17 L942.70,252.90 L943.20,252.59 L943.70,252.26 L944.20,251.90 L944.70,251.51 L945.20,251.11 L945.70,250.68 L946.20,250.23 L946.70,249.76 L947.20,249.28 L947.70,248.79 L948.20,248.28 L948.70,247.76 L949.20,247.24 L949.70,246.71 L950.20,246.18 L950.70,245.65 L951.20,245.12 L951.70,244.59 L952.20,244.07 L952.70,243.55 L953.20,243.05 L953.70,242.55 L954.20,242.07 L954.70,241.60 L955.20,241.15 L955.70,240.72 L956.20,240.31 L956.70,239.92 L957.20,239.56 L957.70,239.23 L958.20,238.93 L958.70,238.66 L959.20,238.42 L959.70,238.22 L960.20,238.06 L960.70,237.94 L961.20,237.85 L961.70,237.82 L962.20,237.83 L962.70,237.89 L963.20,237.99 L963.70,238.14 L964.20,238.32 L964.70,238.53 L965.20,238.77 L965.70,239.03 L966.20,239.31 L966.70,239.60 L967.20,239.90 L967.70,240.20 L968.20,240.50 L968.70,240.80 L969.20,241.10 L969.70,241.40 L970.20,241.69 L970.70,241.97 L971.20,242.25 L971.70,242.52 L972.20,242.79 L972.70,243.04 L973.20,243.28 L973.70,243.51 L974.20,243.73 L974.70,243.93 L975.20,244.12 L975.70,244.28 L976.20,244.44 L976.70,244.57 L977.20,244.68 L977.70,244.77 L978.20,244.84 L978.70,244.89 L979.20,244.91 L979.70,244.91 L980.20,244.87 L980.70,244.81 L981.20,244.73 L981.70,244.62 L982.20,244.49 L982.70,244.35 L983.20,244.21 L983.70,244.08 L984.20,243.95 L984.70,243.84 L985.20,243.75 L985.70,243.68 L986.20,243.66 L986.70,243.67 L987.20,243.71 L987.70,243.80 L988.20,243.91 L988.70,244.05 L989.20,244.22 L989.70,244.41 L990.20,244.63 L990.70,244.86 L991.20,245.11 L991.70,245.37 L992.20,245.64 L992.70,245.92 L993.20,246.20 L993.70,246.49 L994.20,246.78 L994.70,247.07 L995.20,247.35 L995.70,247.62 L996.20,247.88 L996.70,248.13 L997.20,248.37 L997.70,248.58 L998.20,248.78 L998.70,248.95 L999.20,249.10 L999.70,249.22 L1000.20,249.31 L1000.70,249.37 L1001.20,249.41 L1001.70,249.43 L1002.20,249.43 L1002.70,249.42 L1003.20,249.39 L1003.70,249.36 L1004.20,249.32 L1004.70,249.28 L1005.20,249.24 L1005.70,249.20 L1006.20,249.17 L1006.70,249.15 L1007.20,249.14 L1007.70,249.15 L1008.20,249.18 L1008.70,249.22 L1009.20,249.28 L1009.70,249.36 L1010.20,249.44 L1010.70,249.54 L1011.20,249.64 L1011.70,249.76 L1012.20,249.88 L1012.70,250.00 L1013.20,250.13 L1013.70,250.25 L1014.20,250.38 L1014.70,250.51 L1015.20,250.63 L1015.70,250.75 L1016.20,250.86 L1016.70,250.97 L1017.20,251.06 L1017.70,251.15 L1018.20,251.22 L1018.70,251.28 L1019.20,251.32 L1019.70,251.35 L1020.20,251.36 L1020.70,251.35 L1021.20,251.31 L1021.70,251.26 L1022.20,251.18 L1022.70,251.07 L1023.20,250.94 L1023.70,250.79 L1024.20,250.62 L1024.70,250.43 L1025.20,250.22 L1025.70,249.98 L1026.20,249.73 L1026.70,249.47 L1027.20,249.18 L1027.70,248.88 L1028.20,248.57 L1028.70,248.24 L1029.20,247.90 L1029.70,247.54 L1030.20,247.18 L1030.70,246.80 L1031.20,246.42 L1031.70,246.02 L1032.20,245.62 L1032.70,245.21 L1033.20,244.80 L1033.70,244.37 L1034.20,243.95 L1034.70,243.52 L1035.20,243.09 L1035.70,242.65 L1036.20,242.21 L1036.70,241.78 L1037.20,241.34 L1037.70,240.91 L1038.20,240.47 L1038.70,240.05 L1039.20,239.62 L1039.70,239.20 L1040.20,238.78 L1040.70,238.37 L1041.20,237.97 L1041.70,237.58 L1042.20,237.19 L1042.70,236.81 L1043.20,236.44 L1043.70,236.07 L1044.20,235.71 L1044.70,235.34 L1045.20,234.98 L1045.70,234.62 L1046.20,234.26 L1046.70,233.90 L1047.20,233.53 L1047.70,233.17 L1048.20,232.79 L1048.70,232.42 L1049.20,232.03 L1049.70,231.64 L1050.20,231.25 L1050.70,230.84 L1051.20,230.42 L1051.70,229.99 L1052.20,229.55 L1052.70,229.10 L1053.20,228.64 L1053.70,228.15 L1054.20,227.66 L1054.70,227.14 L1055.20,226.61 L1055.70,226.06 L1056.20,225.49 L1056.70,224.91 L1057.20,224.31 L1057.70,223.71 L1058.20,223.09 L1058.70,222.47 L1059.20,221.84 L1059.70,221.21 L1060.20,220.58 L1060.70,219.95 L1061.20,219.32 L1061.70,218.70 L1062.20,218.08 L1062.70,217.48 L1063.20,216.89 L1063.70,216.31 L1064.20,215.74 L1064.70,215.19 L1065.20,214.65 L1065.70,214.14 L1066.20,213.64 L1066.70,213.17 L1067.20,212.72 L1067.70,212.30 L1068.20,211.90 L1068.70,211.53 L1069.20,211.19 L1069.70,210.88 L1070.20,210.61 L1070.70,210.37 L1071.20,210.16 L1071.70,209.99 L1072.20,209.86 L1072.70,209.77 L1073.20,209.73 L1073.70,209.72 L1074.20,209.76 L1074.70,209.84 L1075.20,209.96 L1075.70,210.11 L1076.20,210.29 L1076.70,210.50 L1077.20,210.74 L1077.70,211.01 L1078.20,211.29 L1078.70,211.59 L1079.20,211.91 L1079.70,212.25 L1080.20,212.59 L1080.70,212.94 L1081.20,213.31 L1081.70,213.68 L1082.20,214.05 L1082.70,214.43 L1083.20,214.81 L1083.70,215.19 L1084.20,215.56 L1084.70,215.93 L1085.20,216.30 L1085.70,216.66 L1086.20,217.00 L1086.70,217.34 L1087.20,217.66 L1087.70,217.97 L1088.20,218.26 L1088.70,218.53 L1089.20,218.79 L1089.70,219.02 L1090.20,219.22 L1090.70,219.41 L1091.20,219.56 L1091.70,219.69 L1092.20,219.78 L1092.70,219.85 L1093.20,219.88 L1093.70,219.87 L1094.20,219.83 L1094.70,219.74 L1095.20,219.62 L1095.70,219.46 L1096.20,219.25 L1096.70,218.99 L1097.20,218.69 L1097.70,218.34 L1098.20,217.94 L1098.70,217.49 L1099.20,216.98 L1099.70,216.41 L1100.20,215.79 L1100.70,215.11 L1101.20,214.37 L1101.70,213.56 L1102.20,212.69 L1102.70,211.75 L1103.20,210.75 L1103.70,209.68 L1104.20,208.55 L1104.70,207.37 L1105.20,206.13 L1105.70,204.85 L1106.20,203.52 L1106.70,202.15 L1107.20,200.75 L1107.70,199.32 L1108.20,197.86 L1108.70,196.38 L1109.20,194.88 L1109.70,193.37 L1110.20,191.86 L1110.70,190.33 L1111.20,188.81 L1111.70,187.29 L1112.20,185.78 L1112.70,184.27 L1113.20,182.76 L1113.70,181.25 L1114.20,179.73 L1114.70,178.20 L1115.20,176.65 L1115.70,175.09 L1116.20,173.50 L1116.70,171.90 L1117.20,170.27 L1117.70,168.64 L1118.20,166.98 L1118.70,165.32 L1119.20,163.65 L1119.70,161.96 L1120.20,160.28 L1120.70,158.59 L1121.20,156.89 L1121.70,155.20 L1122.20,153.51 L1122.70,151.82 L1123.20,150.14 L1123.70,148.46 L1124.20,146.80 L1124.70,145.15 L1125.20,143.50 L1125.70,141.88 L1126.20,140.27 L1126.70,138.68 L1127.20,137.11 L1127.70,135.57 L1128.20,134.05 L1128.70,132.55 L1129.20,131.08 L1129.70,129.65 L1130.20,128.25 L1130.70,126.88 L1131.20,125.54 L1131.70,124.25 L1132.20,123.00 L1132.70,121.78 L1133.20,120.61 L1133.70,119.49 L1134.20,118.42 L1134.70,117.39 L1135.20,116.42 L1135.70,115.49 L1136.20,114.63 L1136.70,113.82 L1137.20,113.07 L1137.70,112.38 L1138.20,111.76 L1138.70,111.20 L1139.20,110.70 L1139.70,110.28 L1140.20,109.91 L1140.70,109.61 L1141.20,109.38 L1141.70,109.20 L1142.20,109.08 L1142.70,109.02 L1143.20,109.02 L1143.70,109.07 L1144.20,109.18 L1144.70,109.34 L1145.20,109.55 L1145.70,109.81 L1146.20,110.12 L1146.70,110.48 L1147.20,110.88 L1147.70,111.33 L1148.20,111.82 L1148.70,112.35 L1149.20,112.92 L1149.70,113.53 L1150.20,114.18 L1150.70,114.87 L1151.20,115.59 L1151.70,116.35 L1152.20,117.14 L1152.70,117.96 L1153.20,118.81 L1153.70,119.69 L1154.20,120.59 L1154.70,121.52 L1155.20,122.48 L1155.70,123.46 L1156.20,124.46 L1156.70,125.48 L1157.20,126.52 L1157.70,127.58 L1158.20,128.65 L1158.70,129.74 L1159.20,130.84 L1159.70,131.96 L1160.20,133.09 L1160.70,134.22 L1161.20,135.37 L1161.70,136.52 L1162.20,137.68 L1162.70,138.84 L1163.20,140.01 L1163.70,141.17 L1164.20,142.34 L1164.70,143.51 L1165.20,144.67 L1165.70,145.83 L1166.20,146.99 L1166.70,148.14 L1167.20,149.28 L1167.70,150.41 L1168.20,151.53 L1168.70,152.64 L1169.20,153.75 L1169.70,154.84 L1170.20,155.93 L1170.70,157.02 L1171.20,158.11 L1171.70,159.20 L1172.20,160.29 L1172.70,161.39 L1173.20,162.50 L1173.70,163.61 L1174.20,164.74 L1174.70,165.88 L1175.20,167.03 L1175.70,168.20 L1176.20,169.39 L1176.70,170.60 L1177.20,171.83 L1177.70,173.09 L1178.20,174.37 L1178.70,175.68 L1179.20,177.02 L1179.70,178.40 L1180.20,179.81 L1180.70,181.25 L1181.20,182.72 L1181.70,184.23 L1182.20,185.76 L1182.70,187.31 L1183.20,188.88 L1183.70,190.47 L1184.20,192.08 L1184.70,193.70 L1185.20,195.32 L1185.70,196.95 L1186.20,198.58 L1186.70,200.21 L1187.20,201.82 L1187.70,203.42 L1188.20,205.00 L1188.70,206.55 L1189.20,208.06 L1189.70,209.54 L1190.20,210.98 L1190.70,212.37 L1191.20,213.71 L1191.70,214.99 L1192.20,216.21 L1192.70,217.35 L1193.20,218.43 L1193.70,219.42 L1194.20,220.33 L1194.70,221.16 L1195.20,221.88 L1195.70,222.51 L1196.20,223.04 L1196.70,223.47 L1197.20,223.79 L1197.70,224.01 L1198.20,224.11 L1198.70,224.10 L1199.20,223.97 L1199.70,223.72 L1200.20,223.35 L1200.70,222.85 L1201.20,222.23 L1201.70,221.49 L1202.20,220.64 L1202.70,219.71 L1203.20,218.72 L1203.70,217.68 L1204.20,216.62 L1204.70,215.55 L1205.20,214.49 L1205.70,213.47 L1206.20,212.48 L1206.70,211.52 L1207.20,210.61 L1207.70,209.75 L1208.20,208.93 L1208.70,208.17 L1209.20,207.46 L1209.70,206.80 L1210.20,206.21 L1210.70,205.67 L1211.20,205.21 L1211.70,204.81 L1212.20,204.49 L1212.70,204.24 L1213.20,204.07 L1213.70,203.98 L1214.20,203.98 L1214.70,204.06 L1215.20,204.22 L1215.70,204.45 L1216.20,204.76 L1216.70,205.12 L1217.20,205.56 L1217.70,206.04 L1218.20,206.58 L1218.70,207.17 L1219.20,207.79 L1219.70,208.46 L1220.20,209.17 L1220.70,209.91 L1221.20,210.68 L1221.70,211.47 L1222.20,212.29 L1222.70,213.13 L1223.20,213.98 L1223.70,214.84 L1224.20,215.71 L1224.70,216.59 L1225.20,217.47 L1225.70,218.34 L1226.20,219.21 L1226.70,220.07 L1227.20,220.92 L1227.70,221.75 L1228.20,222.55 L1228.70,223.34 L1229.20,224.10 L1229.70,224.82 L1230.20,225.51 L1230.70,226.17 L1231.20,226.78 L1231.70,227.34 L1232.20,227.86 L1232.70,228.33 L1233.20,228.75 L1233.70,229.13 L1234.20,229.47 L1234.70,229.78 L1235.20,230.06 L1235.70,230.32 L1236.20,230.56 L1236.70,230.78 L1237.20,231.00 L1237.70,231.21 L1238.20,231.42 L1238.70,231.63 L1239.20,231.86 L1239.70,232.09 L1240.20,232.35 L1240.70,232.62 L1241.20,232.92 L1241.70,233.26 L1242.20,233.63 L1242.70,234.04 L1243.20,234.50 L1243.70,235.00 L1244.20,235.57 L1244.70,236.18 L1245.20,236.85 L1245.70,237.57 L1246.20,238.34 L1246.70,239.16 L1247.20,240.02 L1247.70,240.93 L1248.20,241.88 L1248.70,242.87 L1249.20,243.90 L1249.70,244.96 L1250.20,246.06 L1250.70,247.20 L1251.20,248.36 L1251.70,249.55 L1252.20,250.77 L1252.70,252.02 L1253.20,253.29 L1253.70,254.58 L1254.20,255.90 L1254.70,257.24 L1255.20,258.60 L1255.70,259.99 L1256.20,261.41 L1256.70,262.86 L1257.20,264.32 L1257.70,265.79 L1258.20,267.27 L1258.70,268.75 L1259.20,270.22 L1259.70,271.69 L1260.20,273.13 L1260.70,274.56 L1261.20,275.95 L1261.70,277.32 L1262.20,278.64 L1262.70,279.92 L1263.20,281.14 L1263.70,282.31 L1264.20,283.42 L1264.70,284.45 L1265.20,285.41 L1265.70,286.30 L1266.20,287.09 L1266.70,287.81 L1267.20,288.44 L1267.70,289.00 L1268.20,289.49 L1268.70,289.91 L1269.20,290.27 L1269.70,290.57 L1270.20,290.82 L1270.70,291.01 L1271.20,291.17 L1271.70,291.28 L1272.20,291.35 L1272.70,291.39 L1273.20,291.41 L1273.70,291.40 L1274.20,291.36 L1274.70,291.32 L1275.20,291.26 L1275.70,291.20 L1276.20,291.13 L1276.70,291.06 L1277.20,291.00 L1277.70,290.95 L1278.20,290.91 L1278.70,290.90 L1279.20,290.90 L1279.70,290.93 L1280.20,290.99 L1280.70,291.08 L1281.20,291.19 L1281.70,291.32 L1282.20,291.48 L1282.70,291.65 L1283.20,291.84 L1283.70,292.04 L1284.20,292.25 L1284.70,292.47 L1285.20,292.70 L1285.70,292.93 L1286.20,293.16 L1286.70,293.40 L1287.20,293.63 L1287.70,293.86 L1288.20,294.09 L1288.70,294.30 L1289.20,294.51 L1289.70,294.70 L1290.20,294.88 L1290.70,295.04 L1291.20,295.18 L1291.70,295.30 L1292.20,295.40 L1292.70,295.47 L1293.20,295.52 L1293.70,295.53 L1294.20,295.51 L1294.70,295.46 L1295.20,295.38 L1295.70,295.27 L1296.20,295.13 L1296.70,294.96 L1297.20,294.77 L1297.70,294.55 L1298.20,294.31 L1298.70,294.04 L1299.20,293.75 L1299.70,293.44 L1300.20,293.11 L1300.70,292.76 L1301.20,292.40 L1301.70,292.02 L1302.20,291.62 L1302.70,291.21 L1303.20,290.79 L1303.70,290.35 L1304.20,289.91 L1304.70,289.45 L1305.20,288.99 L1305.70,288.51 L1306.20,288.04 L1306.70,287.56 L1307.20,287.07 L1307.70,286.58 L1308.20,286.09 L1308.70,285.60 L1309.20,285.11 L1309.70,284.63 L1310.20,284.14 L1310.70,283.66 L1311.20,283.19 L1311.70,282.72 L1312.20,282.26 L1312.70,281.81 L1313.20,281.37 L1313.70,280.94 L1314.20,280.52 L1314.70,280.12 L1315.20,279.74 L1315.70,279.38 L1316.20,279.05 L1316.70,278.74 L1317.20,278.47 L1317.70,278.23 L1318.20,278.02 L1318.70,277.86 L1319.20,277.74 L1319.70,277.66 L1320.20,277.64 L1320.70,277.66 L1321.20,277.75 L1321.70,277.88 L1322.20,278.08 L1322.70,278.35 L1323.20,278.68 L1323.70,279.08 L1324.20,279.55 L1324.70,280.10 L1325.20,280.73 L1325.70,281.44 L1326.20,282.23 L1326.70,283.11 L1327.20,284.08 L1327.70,285.15 L1328.20,286.31 L1328.70,287.57 L1329.20,288.93 L1329.70,290.39 L1330.20,291.94 L1330.70,293.57 L1331.20,295.28 L1331.70,297.06 L1332.20,298.91 L1332.70,300.82 L1333.20,302.79 L1333.70,304.80 L1334.20,306.86 L1334.70,308.96 L1335.20,311.08 L1335.70,313.23 L1336.20,315.40 L1336.70,317.60 L1337.20,319.83 L1337.70,322.10 L1338.20,324.43 L1338.70,326.82 L1339.20,329.28 L1339.70,331.81 L1340.20,334.43 L1340.70,337.12 L1341.20,339.87 L1341.70,342.68 L1342.20,345.55 L1342.70,348.48 L1343.20,351.45 L1343.70,354.46 L1344.20,357.51 L1344.70,360.60 L1345.20,363.71 L1345.70,366.86 L1346.20,370.03 L1346.70,373.23 L1347.20,376.45 L1347.70,379.71 L1348.20,382.98 L1348.70,386.28 L1349.20,389.61 L1349.70,392.95 L1350.20,396.32 L1350.70,399.70 L1351.20,403.11 L1351.70,406.52 L1352.20,409.94 L1352.70,413.34 L1353.20,416.71 L1353.70,420.02 L1354.20,423.25 L1354.70,426.41 L1355.20,429.46 L1355.70,432.41 L1356.20,435.24 L1356.70,437.93 L1357.20,440.48 L1357.70,442.89 L1358.20,445.15 L1358.70,447.26 L1359.20,449.22 L1359.70,451.04 L1360.20,452.73 L1360.70,454.29 L1361.20,455.72 L1361.70,457.03 L1362.20,458.23 L1362.70,459.31 L1363.20,460.30 L1363.70,461.18 L1364.20,461.97 L1364.70,462.67 L1365.20,463.29 L1365.70,463.83 L1366.20,464.29 L1366.70,464.69 L1367.20,465.02 L1367.70,465.30 L1368.20,465.52 L1368.70,465.70 L1369.20,465.83 L1369.70,465.93 L1370.20,466.00 L1370.70,466.03 L1371.20,466.05 L1371.70,466.05 L1372.20,466.04 L1372.70,466.02 L1373.20,466.00 L1373.60,465.99" fill="none" stroke="#b34de8" stroke-width="2" stroke-linejoin="round" stroke-linecap="round"/>
<g shape-rendering="crispEdges">
<rect x="141" y="26" width="1" height="769" fill="#ffffff"/>
<rect x="30" y="285" width="1422" height="1" fill="#ffffff"/>
</g>
<text transform="translate(11.00,45.90) scale(0.881,1)" font-size="12" fill="#e0e0e0">105</text>
<text transform="translate(10.90,121.90) scale(0.910,1)" font-size="12" fill="#e0e0e0">100</text>
<text transform="translate(17.02,197.90) scale(0.910,1)" font-size="12" fill="#e0e0e0">95</text>
<text transform="translate(16.98,272.90) scale(0.910,1)" font-size="12" fill="#e0e0e0">90</text>
<text transform="translate(17.02,348.90) scale(0.910,1)" font-size="12" fill="#e0e0e0">85</text>
<text transform="translate(16.98,424.90) scale(0.910,1)" font-size="12" fill="#e0e0e0">80</text>
<text transform="translate(17.02,499.90) scale(0.910,1)" font-size="12" fill="#e0e0e0">75</text>
<text transform="translate(16.98,575.90) scale(0.910,1)" font-size="12" fill="#e0e0e0">70</text>
<text transform="translate(17.02,651.90) scale(0.910,1)" font-size="12" fill="#e0e0e0">65</text>
<text transform="translate(16.98,726.90) scale(0.910,1)" font-size="12" fill="#e0e0e0">60</text>
<text transform="translate(1448.64,38.80) scale(0.925,1)" font-size="12" fill="#e0e0e0">432</text>
<text transform="translate(1449.18,78.41) scale(0.910,1)" font-size="12" fill="#e0e0e0">396</text>
<text transform="translate(1449.18,118.01) scale(0.910,1)" font-size="12" fill="#e0e0e0">360</text>
<text transform="translate(1449.18,157.62) scale(0.910,1)" font-size="12" fill="#e0e0e0">324</text>
<text transform="translate(1449.05,197.22) scale(0.910,1)" font-size="12" fill="#e0e0e0">288</text>
<text transform="translate(1449.05,236.82) scale(0.910,1)" font-size="12" fill="#e0e0e0">252</text>
<text transform="translate(1449.05,276.43) scale(0.910,1)" font-size="12" fill="#e0e0e0">216</text>
<text transform="translate(1448.77,316.03) scale(0.910,1)" font-size="12" fill="#e0e0e0">180</text>
<text transform="translate(1448.77,355.64) scale(0.910,1)" font-size="12" fill="#e0e0e0">144</text>
<text transform="translate(1448.77,395.25) scale(0.910,1)" font-size="12" fill="#e0e0e0">108</text>
<text transform="translate(1449.04,434.85) scale(0.910,1)" font-size="12" fill="#e0e0e0">72</text>
<text transform="translate(1449.18,474.45) scale(0.910,1)" font-size="12" fill="#e0e0e0">36</text>
<text transform="translate(1455.57,514.06) scale(0.906,1)" font-size="12" fill="#e0e0e0">0</text>
<text transform="translate(1449.11,553.66) scale(0.930,1)" font-size="12" fill="#e0e0e0">-36</text>
<text transform="translate(1449.11,593.27) scale(0.930,1)" font-size="12" fill="#e0e0e0">-72</text>
<text transform="translate(1449.11,632.87) scale(0.930,1)" font-size="12" fill="#e0e0e0">-108</text>
<text transform="translate(1449.11,672.48) scale(0.930,1)" font-size="12" fill="#e0e0e0">-144</text>
<text transform="translate(1449.11,712.08) scale(0.930,1)" font-size="12" fill="#e0e0e0">-180</text>
<text transform="translate(1449.11,751.69) scale(0.930,1)" font-size="12" fill="#e0e0e0">-216</text>
<text transform="translate(1449.11,791.29) scale(0.930,1)" font-size="12" fill="#e0e0e0">-252</text>
<rect x="1448" y="509" width="5" height="1" fill="#4a7fd0" shape-rendering="crispEdges"/>
<text transform="translate(26.18,808.80) scale(0.904,1)" font-size="12" fill="#e0e0e0">12</text>
<text transform="translate(118.34,808.80) scale(0.920,1)" font-size="12" fill="#e0e0e0">20</text>
<text transform="translate(191.79,808.80) scale(0.920,1)" font-size="12" fill="#e0e0e0">30</text>
<text transform="translate(243.93,808.80) scale(0.920,1)" font-size="12" fill="#e0e0e0">40</text>
<text transform="translate(284.22,808.80) scale(0.920,1)" font-size="12" fill="#e0e0e0">50</text>
<text transform="translate(317.16,808.80) scale(0.920,1)" font-size="12" fill="#e0e0e0">60</text>
<text transform="translate(345.05,808.80) scale(0.920,1)" font-size="12" fill="#e0e0e0">70</text>
<text transform="translate(369.26,808.80) scale(0.920,1)" font-size="12" fill="#e0e0e0">80</text>
<text transform="translate(390.56,808.80) scale(0.920,1)" font-size="12" fill="#e0e0e0">90</text>
<text transform="translate(406.39,808.80) scale(0.920,1)" font-size="12" fill="#e0e0e0">100</text>
<text transform="translate(531.97,808.80) scale(0.920,1)" font-size="12" fill="#e0e0e0">200</text>
<text transform="translate(605.41,808.80) scale(0.920,1)" font-size="12" fill="#e0e0e0">300</text>
<text transform="translate(657.56,808.80) scale(0.920,1)" font-size="12" fill="#e0e0e0">400</text>
<text transform="translate(697.85,808.80) scale(0.920,1)" font-size="12" fill="#e0e0e0">500</text>
<text transform="translate(730.78,808.80) scale(0.920,1)" font-size="12" fill="#e0e0e0">600</text>
<text transform="translate(758.67,808.80) scale(0.920,1)" font-size="12" fill="#e0e0e0">700</text>
<text transform="translate(804.18,808.80) scale(0.920,1)" font-size="12" fill="#e0e0e0">900</text>
<text transform="translate(826.25,808.80) scale(0.920,1)" font-size="12" fill="#e0e0e0">1k</text>
<text transform="translate(951.84,808.80) scale(0.920,1)" font-size="12" fill="#e0e0e0">2k</text>
<text transform="translate(1025.28,808.80) scale(0.920,1)" font-size="12" fill="#e0e0e0">3k</text>
<text transform="translate(1077.42,808.80) scale(0.920,1)" font-size="12" fill="#e0e0e0">4k</text>
<text transform="translate(1117.71,808.80) scale(0.920,1)" font-size="12" fill="#e0e0e0">5k</text>
<text transform="translate(1150.65,808.80) scale(0.920,1)" font-size="12" fill="#e0e0e0">6k</text>
<text transform="translate(1178.54,808.80) scale(0.920,1)" font-size="12" fill="#e0e0e0">7k</text>
<text transform="translate(1202.75,808.80) scale(0.920,1)" font-size="12" fill="#e0e0e0">8k</text>
<text transform="translate(1224.05,808.80) scale(0.920,1)" font-size="12" fill="#e0e0e0">9k</text>
<text transform="translate(1239.88,808.80) scale(0.920,1)" font-size="12" fill="#e0e0e0">10k</text>
<text transform="translate(1272.88,808.80) scale(0.920,1)" font-size="12" fill="#7a7a7a">12k</text>
<text transform="translate(1300.77,808.80) scale(0.920,1)" font-size="12" fill="#7a7a7a">14k</text>
<text transform="translate(1335.91,808.80) scale(0.920,1)" font-size="12" fill="#7a7a7a">17k</text>
<text transform="translate(1365.46,808.80) scale(0.920,1)" font-size="12" fill="#e0e0e0">20k</text>
<text transform="translate(1398.46,808.80) scale(0.920,1)" font-size="12" fill="#7a7a7a">24k</text>
<text transform="translate(1431.06,808.80) scale(0.965,1)" font-size="12" fill="#e0e0e0">30kHz</text>
<g shape-rendering="crispEdges">
<rect x="-0.5" y="277.5" width="30" height="16" fill="#0d0d0d" stroke="#5a8fe0" stroke-width="1"/>
<rect x="1452.5" y="277.5" width="23" height="16" fill="#0d0d0d" stroke="#5a8fe0" stroke-width="1"/>
<rect x="128.5" y="795.5" width="25" height="16" fill="#0d0d0d" stroke="#5a8fe0" stroke-width="1"/>
</g>
<text transform="translate(0.43,290.80) scale(0.908,1)" font-size="12" fill="#62a0f0">88,89</text>
<text transform="translate(1455.17,290.90) scale(0.889,1)" font-size="12" fill="#62a0f0">203</text>
<text transform="translate(131.35,808.80) scale(0.915,1)" font-size="12" fill="#62a0f0">22,0</text>
<g shape-rendering="crispEdges">
<rect x="43" y="816" width="260" height="12" fill="#000"/>
<rect x="303" y="816" width="1132" height="12" fill="#5a5a5a"/>
<rect x="25" y="832" width="1438" height="1" fill="#7c7c7c"/>
<rect x="9" y="0" width="1" height="2" fill="#c8d8d0"/>
</g>
<path d="M34,822 L39,818 L39,826 Z" fill="#bdbdbd"/>
<path d="M1444,822 L1439,818 L1439,826 Z" fill="#bdbdbd"/>
</svg></body></html>
